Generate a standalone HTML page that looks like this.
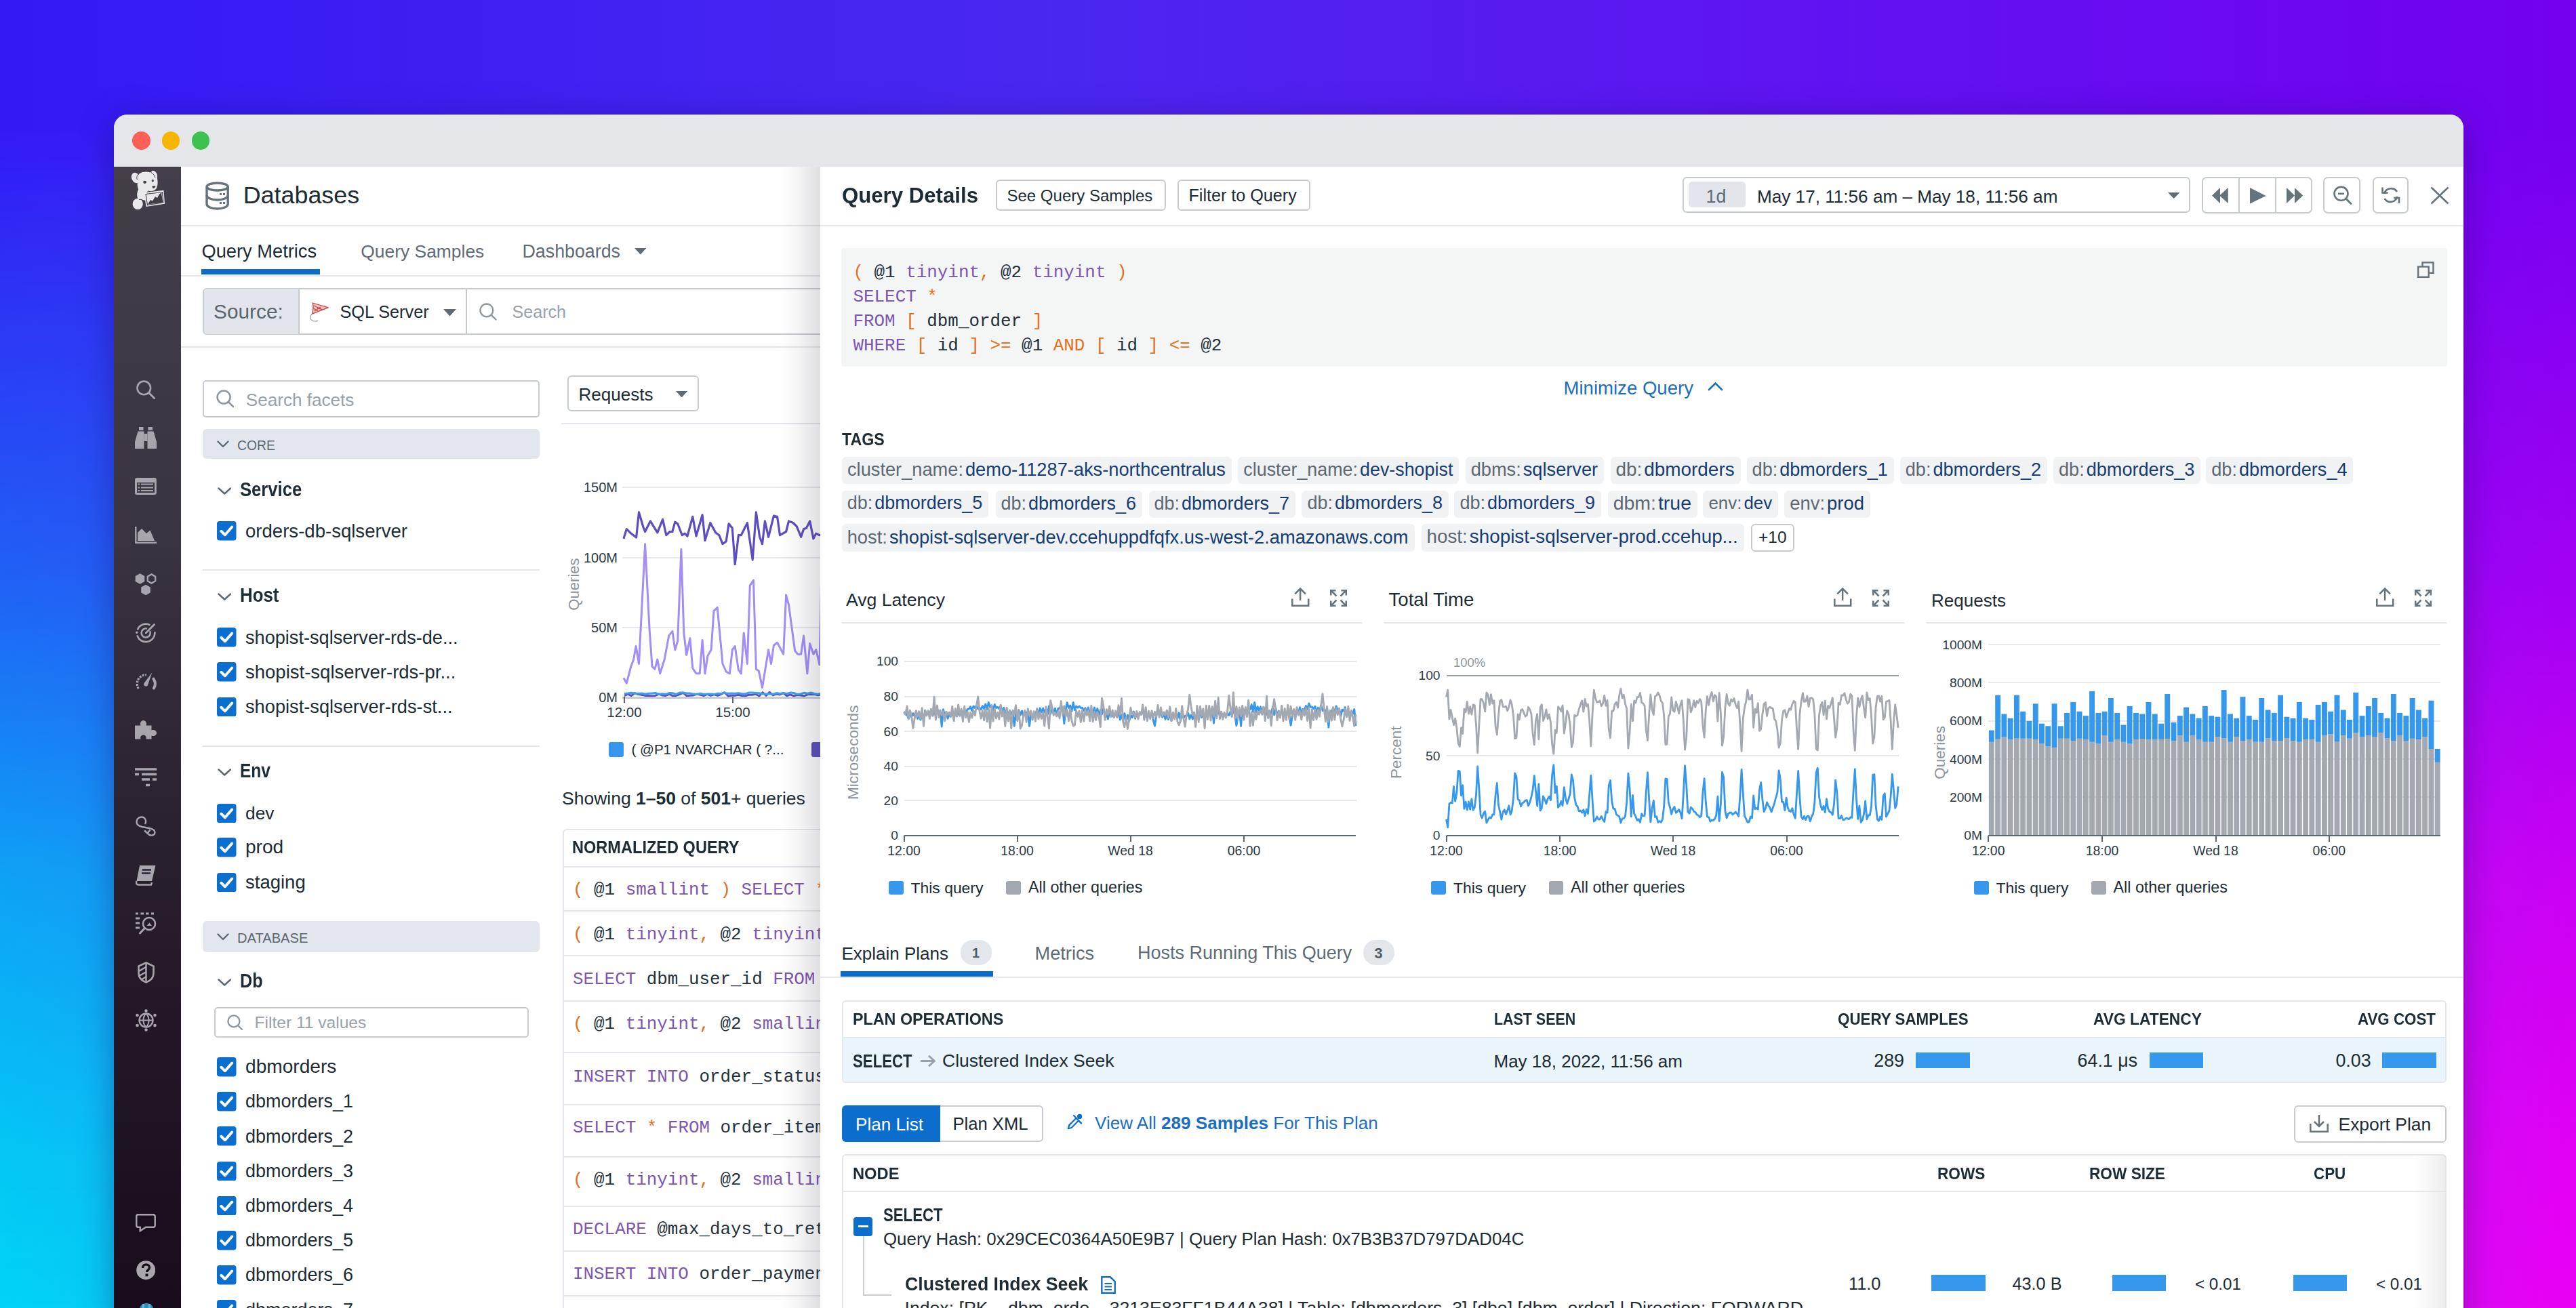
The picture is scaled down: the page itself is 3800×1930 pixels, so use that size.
<!DOCTYPE html><html><head><meta charset="utf-8"><style>
*{box-sizing:border-box;margin:0;padding:0}
html,body{width:3800px;height:1930px;overflow:hidden;font-family:"Liberation Sans",sans-serif;color:#1c2b34}
.a{position:absolute}
.t{position:absolute;white-space:nowrap;line-height:1}
.bg{position:absolute;left:0;top:0;width:3800px;height:1930px}
.mono{font-family:"Liberation Mono",monospace}
.kw{color:#7b57b0}
.op{color:#e0701e}
.tx{color:#23313b}
</style></head><body>
<div class="bg" style="background:linear-gradient(to right,#00d4f6 0%,#4d7af2 45%,#ea00f5 100%)"></div>
<div class="bg" style="background:linear-gradient(to right,#3419f5 0%,#4a27f1 40%,#7400f2 100%);-webkit-mask-image:linear-gradient(to bottom,#000 0%,#000 10%,rgba(0,0,0,.62) 44%,rgba(0,0,0,.27) 67%,rgba(0,0,0,.07) 88%,transparent 100%)"></div>
<div class="a" style="left:168px;top:169px;width:3466px;height:1900px;border-radius:20px;box-shadow:0 8px 50px rgba(20,0,80,.35)"></div>
<div class="a" style="left:168px;top:169px;width:3466px;height:1800px;border-radius:20px 20px 0 0;background:#fff;overflow:hidden">
<div class="a" style="left:0px;top:0px;width:3466px;height:77px;background:#e4e6ea"></div></div>
<div class="a" style="left:195.2px;top:194.3px;width:26.6px;height:26.6px;border-radius:50%;background:#fe5f57"></div>
<div class="a" style="left:238.9px;top:194.3px;width:26.6px;height:26.6px;border-radius:50%;background:#f6b600"></div>
<div class="a" style="left:282.7px;top:194.3px;width:26.6px;height:26.6px;border-radius:50%;background:#3ec14e"></div>
<div class="a" style="left:168px;top:246px;width:99px;height:1700px;background:linear-gradient(to bottom,#433e48 0%,#3b3441 30%,#231929 70%,#170c1b 100%)"></div>
<svg class="a" style="left:302.0px;top:267.5px;" width="38" height="42" viewBox="0 0 38 42"><ellipse cx="18.6" cy="7.5" rx="15.6" ry="5.5" fill="none" stroke="#66737a" stroke-width="3.4"/><path d="M3 7.5 V33 C3 37 10 40 18.6 40 C27 40 34.2 37 34.2 33 V7.5" fill="none" stroke="#66737a" stroke-width="3.4"/><path d="M3 20 C3 24 10 27 18.6 27 C27 27 34.2 24 34.2 20" fill="none" stroke="#66737a" stroke-width="3.4"/><rect x="22" y="17" width="3" height="3" fill="#66737a"/><rect x="27" y="17" width="3" height="3" fill="#66737a"/><rect x="22" y="30" width="3" height="3" fill="#66737a"/><rect x="27" y="30" width="3" height="3" fill="#66737a"/></svg>
<div class="t" style="left:358.8px;top:271.2px;font-size:35.85px;font-weight:400;color:#1c2b34;">Databases</div>
<div class="a" style="left:267.0px;top:331.5px;width:943.0px;height:2.0px;background:#e3e6ea"></div>
<div class="t" style="left:297.5px;top:357.4px;font-size:27.25px;font-weight:400;color:#1c2b34;">Query Metrics</div>
<div class="t" style="left:532.3px;top:358.1px;font-size:26.41px;font-weight:400;color:#5f6b74;">Query Samples</div>
<div class="t" style="left:770.5px;top:357.8px;font-size:26.8px;font-weight:400;color:#5f6b74;">Dashboards</div>
<svg class="a" style="left:936.0px;top:366.0px;" width="17.4" height="9.5" viewBox="0 0 17.4 9.5"><path d="M0 0 L17.4 0 L8.7 9.5 Z" fill="#5f6a72"/></svg>
<div class="a" style="left:297.0px;top:397.0px;width:174.6px;height:8.3px;background:#0b6dcb"></div>
<div class="a" style="left:267.0px;top:405.5px;width:943.0px;height:2.0px;background:#e3e6ea"></div>
<div class="a" style="left:299.0px;top:424.5px;width:1000.0px;height:69.5px;border:2px solid #c6cbd2;border-radius:6px;background:#fff"></div>
<div class="a" style="left:300.5px;top:426.0px;width:139.0px;height:66.5px;background:#e2e6ec;border-radius:5px 0 0 5px"></div>
<div class="a" style="left:439.5px;top:426.0px;width:2.0px;height:66.5px;background:#c6cbd2"></div>
<div class="a" style="left:687.0px;top:426.0px;width:2.0px;height:66.5px;background:#c6cbd2"></div>
<div class="t" style="left:315.0px;top:444.7px;font-size:29.83px;font-weight:400;color:#5a666e;">Source:</div>
<svg class="a" style="left:456.0px;top:446.0px;" width="30" height="30" viewBox="0 0 30 30"><path d="M5.3 1 L28.2 7.8 L4.4 17.2 C6 12 6.5 6 5.3 1 Z" fill="#f2c4c4" stroke="#c9423f" stroke-width="1.3" stroke-linejoin="round"/><path d="M7 5 L18 10 M8 13 L17 7 M6.5 9 L13 13 M12 8.5 L20 11" stroke="#c9423f" stroke-width="1.2"/><path d="M4.4 17.2 C1 20 0 25 6 27.5 C9 28.5 12 28 13 27" fill="none" stroke="#9aa0a5" stroke-width="1.3"/></svg>
<div class="t" style="left:501.5px;top:448.1px;font-size:25.29px;font-weight:400;color:#1c2b34;">SQL Server</div>
<svg class="a" style="left:653.6px;top:456.0px;" width="19" height="10.5" viewBox="0 0 19 10.5"><path d="M0 0 L19 0 L9.5 10.5 Z" fill="#5f6a72"/></svg>
<svg class="a" style="left:707.0px;top:446.5px;" width="26" height="26" viewBox="0 0 26 26"><circle cx="10.9" cy="10.9" r="9.4" fill="none" stroke="#8e979e" stroke-width="2.4"/><path d="M17.7 17.7 L24.5 24.5" stroke="#8e979e" stroke-width="2.4" stroke-linecap="round"/></svg>
<div class="t" style="left:755.5px;top:448.2px;font-size:25.12px;font-weight:400;color:#99a1a8;">Search</div>
<div class="a" style="left:267.0px;top:511.0px;width:943.0px;height:2.0px;background:#e3e6ea"></div>
<div class="a" style="left:299.0px;top:561.0px;width:497.0px;height:54.5px;border:2px solid #c6cbd2;border-radius:5px"></div>
<svg class="a" style="left:319.0px;top:575.0px;" width="26.5" height="26.5" viewBox="0 0 26.5 26.5"><circle cx="11.1" cy="11.1" r="9.5" fill="none" stroke="#8e979e" stroke-width="2.5"/><path d="M18.0 18.0 L25.0 25.0" stroke="#8e979e" stroke-width="2.5" stroke-linecap="round"/></svg>
<div class="t" style="left:362.8px;top:577.4px;font-size:26.1px;font-weight:400;color:#99a1a8;">Search facets</div>
<div class="a" style="left:299.0px;top:632.5px;width:497.0px;height:44.0px;background:#e3e7ed;border-radius:6px"></div>
<svg class="a" style="left:320.0px;top:650.0px;" width="18" height="10.5" viewBox="0 0 18 10.5"><path d="M1.5 1.5 L9.0 9.0 L16.5 1.5" fill="none" stroke="#5c6871" stroke-width="2.4" stroke-linecap="round" stroke-linejoin="round"/></svg>
<div class="t" style="left:350.0px;top:648.1px;font-size:19.38px;font-weight:400;color:#5c6871;">CORE</div>
<svg class="a" style="left:320.5px;top:719.0px;" width="20.5" height="11" viewBox="0 0 20.5 11"><path d="M1.5 1.5 L10.25 9.5 L19.0 1.5" fill="none" stroke="#5c6871" stroke-width="2.4" stroke-linecap="round" stroke-linejoin="round"/></svg>
<div class="t" style="left:353.5px;top:708.2px;font-size:28.7px;font-weight:700;color:#1c2b34;transform:scaleX(0.8939);transform-origin:0 0;">Service</div>
<svg class="a" style="left:320.0px;top:769.0px;" width="28.5" height="28.5" viewBox="0 0 28.5 28.5"><rect x="0" y="0" width="28.5" height="28.5" rx="4" fill="#0b6fcf"/><path d="M6.3 14.8 L12.0 20.2 L22.2 8.5" fill="none" stroke="#fff" stroke-width="4.0" stroke-linecap="round" stroke-linejoin="round"/></svg>
<div class="t" style="left:362.0px;top:769.7px;font-size:27.57px;font-weight:400;color:#1c2b34;">orders-db-sqlserver</div>
<div class="a" style="left:299.0px;top:839.5px;width:497.0px;height:2.0px;background:#e3e6ea"></div>
<svg class="a" style="left:320.5px;top:874.5px;" width="20.5" height="11" viewBox="0 0 20.5 11"><path d="M1.5 1.5 L10.25 9.5 L19.0 1.5" fill="none" stroke="#5c6871" stroke-width="2.4" stroke-linecap="round" stroke-linejoin="round"/></svg>
<div class="t" style="left:353.5px;top:863.7px;font-size:28.7px;font-weight:700;color:#1c2b34;transform:scaleX(0.9000);transform-origin:0 0;">Host</div>
<svg class="a" style="left:320.0px;top:926.0px;" width="28.5" height="28.5" viewBox="0 0 28.5 28.5"><rect x="0" y="0" width="28.5" height="28.5" rx="4" fill="#0b6fcf"/><path d="M6.3 14.8 L12.0 20.2 L22.2 8.5" fill="none" stroke="#fff" stroke-width="4.0" stroke-linecap="round" stroke-linejoin="round"/></svg>
<div class="t" style="left:362.0px;top:927.0px;font-size:27.14px;font-weight:400;color:#1c2b34;">shopist-sqlserver-rds-de...</div>
<svg class="a" style="left:320.0px;top:977.0px;" width="28.5" height="28.5" viewBox="0 0 28.5 28.5"><rect x="0" y="0" width="28.5" height="28.5" rx="4" fill="#0b6fcf"/><path d="M6.3 14.8 L12.0 20.2 L22.2 8.5" fill="none" stroke="#fff" stroke-width="4.0" stroke-linecap="round" stroke-linejoin="round"/></svg>
<div class="t" style="left:362.0px;top:977.7px;font-size:27.53px;font-weight:400;color:#1c2b34;">shopist-sqlserver-rds-pr...</div>
<svg class="a" style="left:320.0px;top:1028.5px;" width="28.5" height="28.5" viewBox="0 0 28.5 28.5"><rect x="0" y="0" width="28.5" height="28.5" rx="4" fill="#0b6fcf"/><path d="M6.3 14.8 L12.0 20.2 L22.2 8.5" fill="none" stroke="#fff" stroke-width="4.0" stroke-linecap="round" stroke-linejoin="round"/></svg>
<div class="t" style="left:362.0px;top:1029.4px;font-size:27.23px;font-weight:400;color:#1c2b34;">shopist-sqlserver-rds-st...</div>
<div class="a" style="left:299.0px;top:1100.0px;width:497.0px;height:2.0px;background:#e3e6ea"></div>
<svg class="a" style="left:320.5px;top:1134.0px;" width="20.5" height="11" viewBox="0 0 20.5 11"><path d="M1.5 1.5 L10.25 9.5 L19.0 1.5" fill="none" stroke="#5c6871" stroke-width="2.4" stroke-linecap="round" stroke-linejoin="round"/></svg>
<div class="t" style="left:353.5px;top:1123.2px;font-size:28.7px;font-weight:700;color:#1c2b34;transform:scaleX(0.8549);transform-origin:0 0;">Env</div>
<svg class="a" style="left:320.0px;top:1185.6px;" width="28.5" height="28.5" viewBox="0 0 28.5 28.5"><rect x="0" y="0" width="28.5" height="28.5" rx="4" fill="#0b6fcf"/><path d="M6.3 14.8 L12.0 20.2 L22.2 8.5" fill="none" stroke="#fff" stroke-width="4.0" stroke-linecap="round" stroke-linejoin="round"/></svg>
<div class="t" style="left:362.0px;top:1187.3px;font-size:26.36px;font-weight:400;color:#1c2b34;">dev</div>
<svg class="a" style="left:320.0px;top:1236.0px;" width="28.5" height="28.5" viewBox="0 0 28.5 28.5"><rect x="0" y="0" width="28.5" height="28.5" rx="4" fill="#0b6fcf"/><path d="M6.3 14.8 L12.0 20.2 L22.2 8.5" fill="none" stroke="#fff" stroke-width="4.0" stroke-linecap="round" stroke-linejoin="round"/></svg>
<div class="t" style="left:362.0px;top:1236.2px;font-size:28.08px;font-weight:400;color:#1c2b34;">prod</div>
<svg class="a" style="left:320.0px;top:1287.5px;" width="28.5" height="28.5" viewBox="0 0 28.5 28.5"><rect x="0" y="0" width="28.5" height="28.5" rx="4" fill="#0b6fcf"/><path d="M6.3 14.8 L12.0 20.2 L22.2 8.5" fill="none" stroke="#fff" stroke-width="4.0" stroke-linecap="round" stroke-linejoin="round"/></svg>
<div class="t" style="left:362.0px;top:1288.2px;font-size:27.51px;font-weight:400;color:#1c2b34;">staging</div>
<div class="a" style="left:299.0px;top:1359.0px;width:497.0px;height:45.6px;background:#e3e7ed;border-radius:6px"></div>
<svg class="a" style="left:320.0px;top:1377.0px;" width="18" height="10.5" viewBox="0 0 18 10.5"><path d="M1.5 1.5 L9.0 9.0 L16.5 1.5" fill="none" stroke="#5c6871" stroke-width="2.4" stroke-linecap="round" stroke-linejoin="round"/></svg>
<div class="t" style="left:350.0px;top:1373.5px;font-size:20.13px;font-weight:400;color:#5c6871;">DATABASE</div>
<svg class="a" style="left:320.5px;top:1443.5px;" width="20.5" height="11" viewBox="0 0 20.5 11"><path d="M1.5 1.5 L10.25 9.5 L19.0 1.5" fill="none" stroke="#5c6871" stroke-width="2.4" stroke-linecap="round" stroke-linejoin="round"/></svg>
<div class="t" style="left:353.5px;top:1432.7px;font-size:28.7px;font-weight:700;color:#1c2b34;transform:scaleX(0.8756);transform-origin:0 0;">Db</div>
<div class="a" style="left:316.0px;top:1485.7px;width:464.0px;height:45.3px;border:2px solid #c6cbd2;border-radius:5px"></div>
<svg class="a" style="left:335.0px;top:1497.0px;" width="23.5" height="23.5" viewBox="0 0 23.5 23.5"><circle cx="9.9" cy="9.9" r="8.5" fill="none" stroke="#8e979e" stroke-width="2.3"/><path d="M16.0 16.0 L22.0 22.0" stroke="#8e979e" stroke-width="2.3" stroke-linecap="round"/></svg>
<div class="t" style="left:375.5px;top:1496.7px;font-size:24.57px;font-weight:400;color:#99a1a8;">Filter 11 values</div>
<svg class="a" style="left:320.0px;top:1560.0px;" width="28.5" height="28.5" viewBox="0 0 28.5 28.5"><rect x="0" y="0" width="28.5" height="28.5" rx="4" fill="#0b6fcf"/><path d="M6.3 14.8 L12.0 20.2 L22.2 8.5" fill="none" stroke="#fff" stroke-width="4.0" stroke-linecap="round" stroke-linejoin="round"/></svg>
<div class="t" style="left:362.0px;top:1560.2px;font-size:28.12px;font-weight:400;color:#1c2b34;">dbmorders</div>
<svg class="a" style="left:320.0px;top:1611.2px;" width="28.5" height="28.5" viewBox="0 0 28.5 28.5"><rect x="0" y="0" width="28.5" height="28.5" rx="4" fill="#0b6fcf"/><path d="M6.3 14.8 L12.0 20.2 L22.2 8.5" fill="none" stroke="#fff" stroke-width="4.0" stroke-linecap="round" stroke-linejoin="round"/></svg>
<div class="t" style="left:362.0px;top:1612.4px;font-size:26.98px;font-weight:400;color:#1c2b34;">dbmorders_1</div>
<svg class="a" style="left:320.0px;top:1662.4px;" width="28.5" height="28.5" viewBox="0 0 28.5 28.5"><rect x="0" y="0" width="28.5" height="28.5" rx="4" fill="#0b6fcf"/><path d="M6.3 14.8 L12.0 20.2 L22.2 8.5" fill="none" stroke="#fff" stroke-width="4.0" stroke-linecap="round" stroke-linejoin="round"/></svg>
<div class="t" style="left:362.0px;top:1663.6px;font-size:26.98px;font-weight:400;color:#1c2b34;">dbmorders_2</div>
<svg class="a" style="left:320.0px;top:1713.6px;" width="28.5" height="28.5" viewBox="0 0 28.5 28.5"><rect x="0" y="0" width="28.5" height="28.5" rx="4" fill="#0b6fcf"/><path d="M6.3 14.8 L12.0 20.2 L22.2 8.5" fill="none" stroke="#fff" stroke-width="4.0" stroke-linecap="round" stroke-linejoin="round"/></svg>
<div class="t" style="left:362.0px;top:1714.8px;font-size:26.98px;font-weight:400;color:#1c2b34;">dbmorders_3</div>
<svg class="a" style="left:320.0px;top:1764.8px;" width="28.5" height="28.5" viewBox="0 0 28.5 28.5"><rect x="0" y="0" width="28.5" height="28.5" rx="4" fill="#0b6fcf"/><path d="M6.3 14.8 L12.0 20.2 L22.2 8.5" fill="none" stroke="#fff" stroke-width="4.0" stroke-linecap="round" stroke-linejoin="round"/></svg>
<div class="t" style="left:362.0px;top:1766.0px;font-size:26.98px;font-weight:400;color:#1c2b34;">dbmorders_4</div>
<svg class="a" style="left:320.0px;top:1816.0px;" width="28.5" height="28.5" viewBox="0 0 28.5 28.5"><rect x="0" y="0" width="28.5" height="28.5" rx="4" fill="#0b6fcf"/><path d="M6.3 14.8 L12.0 20.2 L22.2 8.5" fill="none" stroke="#fff" stroke-width="4.0" stroke-linecap="round" stroke-linejoin="round"/></svg>
<div class="t" style="left:362.0px;top:1817.2px;font-size:26.98px;font-weight:400;color:#1c2b34;">dbmorders_5</div>
<svg class="a" style="left:320.0px;top:1867.2px;" width="28.5" height="28.5" viewBox="0 0 28.5 28.5"><rect x="0" y="0" width="28.5" height="28.5" rx="4" fill="#0b6fcf"/><path d="M6.3 14.8 L12.0 20.2 L22.2 8.5" fill="none" stroke="#fff" stroke-width="4.0" stroke-linecap="round" stroke-linejoin="round"/></svg>
<div class="t" style="left:362.0px;top:1868.4px;font-size:26.98px;font-weight:400;color:#1c2b34;">dbmorders_6</div>
<svg class="a" style="left:320.0px;top:1918.4px;" width="28.5" height="28.5" viewBox="0 0 28.5 28.5"><rect x="0" y="0" width="28.5" height="28.5" rx="4" fill="#0b6fcf"/><path d="M6.3 14.8 L12.0 20.2 L22.2 8.5" fill="none" stroke="#fff" stroke-width="4.0" stroke-linecap="round" stroke-linejoin="round"/></svg>
<div class="t" style="left:362.0px;top:1919.6px;font-size:26.98px;font-weight:400;color:#1c2b34;">dbmorders_7</div>
<div class="a" style="left:836.7px;top:553.5px;width:194.0px;height:53.5px;border:2px solid #c6cbd2;border-radius:6px"></div>
<div class="t" style="left:853.5px;top:569.0px;font-size:26.04px;font-weight:400;color:#1c2b34;">Requests</div>
<svg class="a" style="left:996.8px;top:576.5px;" width="17.2" height="9.5" viewBox="0 0 17.2 9.5"><path d="M0 0 L17.2 0 L8.6 9.5 Z" fill="#5f6a72"/></svg>
<div class="a" style="left:828.0px;top:623.5px;width:382.0px;height:2.0px;background:#e3e6ea"></div>
<div class="a" style="left:829.6px;top:1222.5px;width:500.0px;height:800.0px;border:2px solid #e3e6ea;border-radius:6px"></div>
<div class="t" style="left:844.0px;top:1237.5px;font-size:25.36px;font-weight:700;color:#1c2b34;transform:scaleX(0.9290);transform-origin:0 0;">NORMALIZED QUERY</div>
<div class="a" style="left:831.0px;top:1277.5px;width:379.0px;height:2.0px;background:#e3e6ea"></div>
<div class="a" style="left:831.0px;top:1343.0px;width:379.0px;height:2.0px;background:#e3e6ea"></div>
<div class="a" style="left:831.0px;top:1409.0px;width:379.0px;height:2.0px;background:#e3e6ea"></div>
<div class="a" style="left:831.0px;top:1475.5px;width:379.0px;height:2.0px;background:#e3e6ea"></div>
<div class="a" style="left:831.0px;top:1552.0px;width:379.0px;height:2.0px;background:#e3e6ea"></div>
<div class="a" style="left:831.0px;top:1629.0px;width:379.0px;height:2.0px;background:#e3e6ea"></div>
<div class="a" style="left:831.0px;top:1705.7px;width:379.0px;height:2.0px;background:#e3e6ea"></div>
<div class="a" style="left:831.0px;top:1778.7px;width:379.0px;height:2.0px;background:#e3e6ea"></div>
<div class="a" style="left:831.0px;top:1844.6px;width:379.0px;height:2.0px;background:#e3e6ea"></div>
<div class="a" style="left:831.0px;top:1911.0px;width:379.0px;height:2.0px;background:#e3e6ea"></div>
<div class="t" style="left:845.0px;top:1301.2px;font-size:25.9px;font-weight:400;color:#1c2b34;font-family:'Liberation Mono',monospace;letter-spacing:0px"><span class="op">(</span><span class="tx"> @1 </span><span class="kw">smallint</span><span class="op"> )</span><span class="kw"> SELECT</span><span class="op"> *</span></div>
<div class="t" style="left:845.0px;top:1366.7px;font-size:25.9px;font-weight:400;color:#1c2b34;font-family:'Liberation Mono',monospace;letter-spacing:0px"><span class="op">(</span><span class="tx"> @1 </span><span class="kw">tinyint</span><span class="op">,</span><span class="tx"> @2 </span><span class="kw">tinyint</span></div>
<div class="t" style="left:845.0px;top:1432.7px;font-size:25.9px;font-weight:400;color:#1c2b34;font-family:'Liberation Mono',monospace;letter-spacing:0px"><span class="kw">SELECT</span><span class="tx"> dbm_user_id </span><span class="kw">FROM</span></div>
<div class="t" style="left:845.0px;top:1499.2px;font-size:25.9px;font-weight:400;color:#1c2b34;font-family:'Liberation Mono',monospace;letter-spacing:0px"><span class="op">(</span><span class="tx"> @1 </span><span class="kw">tinyint</span><span class="op">,</span><span class="tx"> @2 </span><span class="kw">smallint</span></div>
<div class="t" style="left:845.0px;top:1576.7px;font-size:25.9px;font-weight:400;color:#1c2b34;font-family:'Liberation Mono',monospace;letter-spacing:0px"><span class="kw">INSERT INTO</span><span class="tx"> order_status</span></div>
<div class="t" style="left:845.0px;top:1652.2px;font-size:25.9px;font-weight:400;color:#1c2b34;font-family:'Liberation Mono',monospace;letter-spacing:0px"><span class="kw">SELECT</span><span class="op"> *</span><span class="kw"> FROM</span><span class="tx"> order_item</span></div>
<div class="t" style="left:845.0px;top:1729.2px;font-size:25.9px;font-weight:400;color:#1c2b34;font-family:'Liberation Mono',monospace;letter-spacing:0px"><span class="op">(</span><span class="tx"> @1 </span><span class="kw">tinyint</span><span class="op">,</span><span class="tx"> @2 </span><span class="kw">smallint</span></div>
<div class="t" style="left:845.0px;top:1802.2px;font-size:25.9px;font-weight:400;color:#1c2b34;font-family:'Liberation Mono',monospace;letter-spacing:0px"><span class="kw">DECLARE</span><span class="tx"> @max_days_to_ret</span></div>
<div class="t" style="left:845.0px;top:1868.2px;font-size:25.9px;font-weight:400;color:#1c2b34;font-family:'Liberation Mono',monospace;letter-spacing:0px"><span class="kw">INSERT INTO</span><span class="tx"> order_paymen</span></div>
<div class="t" style="left:829.0px;top:1165.1px;font-size:26.5px;font-weight:400;color:#1c2b34;">Showing <b>1–50</b> of <b>501</b>+ queries</div>
<div class="a" style="left:918.0px;top:717.5px;width:292.0px;height:2.0px;background:#e6e8eb"></div>
<div class="a" style="left:918.0px;top:821.5px;width:292.0px;height:2.0px;background:#e6e8eb"></div>
<div class="a" style="left:918.0px;top:925.0px;width:292.0px;height:2.0px;background:#e6e8eb"></div>
<div class="t" style="left:861.0px;top:708.6px;font-size:20px;font-weight:400;color:#2c3a44;">150M</div>
<div class="t" style="left:861.0px;top:812.6px;font-size:20px;font-weight:400;color:#2c3a44;">100M</div>
<div class="t" style="left:872.1px;top:916.1px;font-size:20px;font-weight:400;color:#2c3a44;">50M</div>
<div class="t" style="left:883.2px;top:1018.8px;font-size:20px;font-weight:400;color:#2c3a44;">0M</div>
<div class="a" style="left:918.0px;top:1027.5px;width:292.0px;height:3.0px;background:#c7ccd3"></div>
<div class="a" style="left:920.0px;top:1028.0px;width:2.0px;height:9.0px;background:#5c666e"></div>
<div class="t" style="left:895.3px;top:1041.1px;font-size:20.5px;font-weight:400;color:#2c3a44;">12:00</div>
<div class="a" style="left:1080.0px;top:1028.0px;width:2.0px;height:9.0px;background:#5c666e"></div>
<div class="t" style="left:1055.3px;top:1041.1px;font-size:20.5px;font-weight:400;color:#2c3a44;">15:00</div>
<div class="t" style="left:808.3px;top:850.9px;font-size:22.13px;color:#8d959b;transform:rotate(-90deg);transform-origin:38.7px 11.1px">Queries</div>
<svg class="a" style="left:0;top:0;clip-path:inset(0 2590px 0 0)" width="3800" height="1930"><polyline points="919.9,1000.3 924.3,1008.1 930.8,983.4 934.7,973.0 938.1,953.5 942.5,979.5 951.6,802.7 958.1,928.8 962.0,983.4 965.9,987.3 969.8,973.0 973.7,993.8 980.2,973.0 986.7,937.9 991.9,931.4 995.8,958.7 999.7,945.7 1004.9,810.5 1008.8,934.0 1012.7,966.5 1017.9,941.8 1021.8,986.0 1027.0,993.8 1032.2,993.8 1036.1,944.4 1040.0,993.8 1043.9,967.8 1049.1,958.7 1053.0,901.5 1058.2,896.3 1066.0,979.5 1071.2,991.2 1076.4,993.8 1080.3,958.7 1084.2,953.5 1089.4,988.6 1093.3,993.8 1097.2,934.0 1102.4,979.5 1106.3,863.8 1111.5,856.0 1115.4,987.3 1119.3,989.9 1124.5,1014.6 1133.6,958.7 1137.5,979.5 1141.4,952.2 1146.6,948.3 1155.7,965.2 1159.6,878.1 1163.5,892.4 1172.6,960.0 1176.5,965.2 1181.7,965.2 1185.6,937.9 1190.8,993.8 1194.7,949.6 1199.9,965.2 1203.8,958.7 1209.0,980.8 1211.6,856.0" fill="none" stroke="#a38df7" stroke-width="3" stroke-linejoin="round" /><polyline points="919.9,794.9 924.3,780.6 930.8,787.1 938.6,793.1 942.5,755.9 949.0,778.0 951.6,784.5 959.4,768.9 969.8,785.8 977.6,766.3 982.8,789.7 988.0,784.5 991.9,784.5 995.8,770.2 999.7,772.8 1006.2,789.7 1010.1,787.1 1014.0,791.0 1021.8,762.4 1027.0,791.0 1036.1,759.8 1040.0,797.5 1047.8,771.5 1055.6,785.8 1060.8,789.7 1066.0,802.7 1071.2,798.8 1075.1,772.8 1080.3,779.3 1084.2,832.6 1089.4,789.7 1093.3,789.7 1102.4,771.5 1110.2,826.1 1115.4,755.9 1120.6,792.3 1124.5,802.7 1128.4,768.9 1133.6,792.3 1141.4,761.1 1146.6,762.4 1150.5,789.7 1159.6,784.5 1163.5,768.9 1170.0,771.5 1175.2,776.7 1181.7,792.3 1185.6,780.6 1189.5,779.3 1194.7,768.9 1199.9,794.9 1203.8,787.1 1209.0,789.7 1216.8,785.8" fill="none" stroke="#5c4ec0" stroke-width="3.2" stroke-linejoin="round" /><polyline points="921.0,1026.7 926.1,1024.1 931.2,1026.6 936.3,1022.7 941.4,1024.6 946.5,1025.3 951.6,1026.4 956.7,1026.6 961.8,1026.7 966.9,1026.4 972.0,1024.1 977.1,1026.1 982.2,1026.4 987.3,1024.4 992.4,1026.7 997.5,1026.4 1002.6,1024.7 1007.7,1022.1 1012.8,1026.7 1017.9,1026.3 1023.0,1025.9 1028.1,1024.1 1033.2,1025.3 1038.3,1026.5 1043.4,1024.3 1048.5,1026.3 1053.6,1024.8 1058.7,1026.4 1063.8,1024.4 1068.9,1021.7 1074.0,1026.9 1079.1,1026.3 1084.2,1026.2 1089.3,1025.2 1094.4,1026.5 1099.5,1026.8 1104.6,1025.3 1109.7,1025.2 1114.8,1024.2 1119.9,1027.0 1125.0,1021.7 1130.1,1026.5 1135.2,1021.3 1140.3,1025.9 1145.4,1024.1 1150.5,1024.9 1155.6,1022.6 1160.7,1026.9 1165.8,1024.9 1170.9,1026.9 1176.0,1025.6 1181.1,1026.0 1186.2,1026.8 1191.3,1024.8 1196.4,1024.8 1201.5,1024.6 1206.6,1025.9 1211.7,1024.3 1216.8,1025.7 1221.9,1024.4" fill="none" stroke="#5c4ec0" stroke-width="3" stroke-linejoin="round" /><polyline points="921.0,1023.4 926.1,1023.1 931.2,1022.2 936.3,1023.3 941.4,1023.2 946.5,1023.0 951.6,1024.0 956.7,1023.2 961.8,1022.9 966.9,1022.5 972.0,1024.3 977.1,1023.7 982.2,1024.3 987.3,1022.5 992.4,1022.8 997.5,1024.4 1002.6,1022.0 1007.7,1022.1 1012.8,1022.9 1017.9,1023.0 1023.0,1024.1 1028.1,1024.5 1033.2,1023.2 1038.3,1024.4 1043.4,1024.0 1048.5,1023.9 1053.6,1024.4 1058.7,1023.3 1063.8,1023.4 1068.9,1022.4 1074.0,1023.2 1079.1,1022.9 1084.2,1023.3 1089.3,1022.8 1094.4,1023.4 1099.5,1023.8 1104.6,1022.0 1109.7,1022.0 1114.8,1022.4 1119.9,1022.7 1125.0,1023.7 1130.1,1023.9 1135.2,1023.8 1140.3,1024.3 1145.4,1022.6 1150.5,1023.5 1155.6,1022.4 1160.7,1023.5 1165.8,1022.1 1170.9,1022.4 1176.0,1024.5 1181.1,1024.0 1186.2,1022.2 1191.3,1023.3 1196.4,1022.0 1201.5,1023.5 1206.6,1024.3 1211.7,1022.9 1216.8,1022.6 1221.9,1023.8" fill="none" stroke="#3aa0ee" stroke-width="3" stroke-linejoin="round" /></svg>
<div class="a" style="left:897.5px;top:1095.0px;width:22.5px;height:22.0px;background:#3598ec;border-radius:3px"></div>
<div class="t" style="left:931.5px;top:1095.6px;font-size:20.56px;font-weight:400;color:#1c2b34;">( @P1 NVARCHAR ( ?...</div>
<div class="a" style="left:1197.0px;top:1095.0px;width:22.5px;height:22.0px;background:#5c4ec0;border-radius:3px"></div>
<div class="a" style="left:1150.0px;top:246.0px;width:60.0px;height:1700.0px;background:linear-gradient(to right,rgba(40,40,60,0) 0%,rgba(40,40,60,.04) 40%,rgba(40,40,60,.15) 100%)"></div>
<div class="a" style="left:1210.0px;top:246.0px;width:2424.0px;height:1700.0px;background:#fff"></div>
<div class="t" style="left:1241.5px;top:272.5px;font-size:31.88px;font-weight:700;color:#1c2b34;transform:scaleX(0.9779);transform-origin:0 0;">Query Details</div>
<div class="a" style="left:1469.0px;top:265.0px;width:250.6px;height:46.4px;border:2px solid #c6cbd2;border-radius:6px"></div>
<div class="t" style="left:1485.5px;top:277.2px;font-size:24.01px;font-weight:400;color:#1c2b34;">See Query Samples</div>
<div class="a" style="left:1737.0px;top:265.0px;width:196.0px;height:46.4px;border:2px solid #c6cbd2;border-radius:6px"></div>
<div class="t" style="left:1753.5px;top:276.2px;font-size:25.15px;font-weight:400;color:#1c2b34;">Filter to Query</div>
<div class="a" style="left:2481.7px;top:261.3px;width:749.7px;height:53.1px;border:2px solid #c6cbd2;border-radius:6px"></div>
<div class="a" style="left:2491.0px;top:268.4px;width:84.0px;height:37.9px;background:#e2e6ec;border-radius:5px"></div>
<div class="t" style="left:2516.5px;top:276.5px;font-size:26.79px;font-weight:400;color:#5f6b74;">1d</div>
<div class="t" style="left:2592.0px;top:277.1px;font-size:26.14px;font-weight:400;color:#1c2b34;">May 17, 11:56 am – May 18, 11:56 am</div>
<svg class="a" style="left:3197.7px;top:284.0px;" width="17.6" height="9" viewBox="0 0 17.6 9"><path d="M0 0 L17.6 0 L8.8 9 Z" fill="#5f6a72"/></svg>
<div class="a" style="left:3248.3px;top:260.9px;width:162.3px;height:53.7px;border:2px solid #c6cbd2;border-radius:7px"></div>
<div class="a" style="left:3302.0px;top:262.0px;width:2.0px;height:51.5px;background:#c6cbd2"></div>
<div class="a" style="left:3355.6px;top:262.0px;width:2.0px;height:51.5px;background:#c6cbd2"></div>
<svg class="a" style="left:3263.2px;top:276.8px;" width="24" height="23" viewBox="0 0 24 23"><path d="M0 11.5 L12 0 V23 Z M11 11.5 L23.8 0 V23 Z" fill="#66737a"/></svg>
<svg class="a" style="left:3319.0px;top:276.5px;" width="24" height="24" viewBox="0 0 24 24"><path d="M0 0 L23.6 12 L0 23.5 Z" fill="#66737a"/></svg>
<svg class="a" style="left:3372.5px;top:276.8px;" width="25" height="23" viewBox="0 0 25 23"><path d="M0 0 L12 11.5 L0 23 Z M12 0 L24.2 11.5 L12 23 Z" fill="#66737a"/></svg>
<div class="a" style="left:3427.4px;top:260.9px;width:54.8px;height:53.7px;border:2px solid #c6cbd2;border-radius:7px"></div>
<svg class="a" style="left:3440.0px;top:273.0px;" width="30" height="30" viewBox="0 0 30 30"><circle cx="13.5" cy="12.8" r="10" fill="none" stroke="#66737a" stroke-width="2.6"/><path d="M9 12.8 H18" stroke="#66737a" stroke-width="2.6"/><path d="M20.8 20.2 L28 27.4" stroke="#66737a" stroke-width="2.8" stroke-linecap="round"/></svg>
<div class="a" style="left:3499.7px;top:260.9px;width:53.4px;height:53.7px;border:2px solid #c6cbd2;border-radius:7px"></div>
<svg class="a" style="left:3513.0px;top:274.5px;" width="28" height="27" viewBox="0 0 28 27"><path d="M4 11 A10.5 10.5 0 0 1 23 8" fill="none" stroke="#66737a" stroke-width="2.6"/><path d="M23.5 15 A10.5 10.5 0 0 1 4.5 18" fill="none" stroke="#66737a" stroke-width="2.6"/><path d="M1.5 1.5 V9.5 H9.5" fill="none" stroke="#66737a" stroke-width="2.6"/><path d="M26 25 V17 H18" fill="none" stroke="#66737a" stroke-width="2.6"/></svg>
<svg class="a" style="left:3584.5px;top:274.5px;" width="28" height="27" viewBox="0 0 28 27"><path d="M1.5 1.5 L26.5 25.5 M26.5 1.5 L1.5 25.5" stroke="#66737a" stroke-width="2.6"/></svg>
<div class="a" style="left:1210.0px;top:331.5px;width:2423.0px;height:2.0px;background:#e3e6ea"></div>
<div class="a" style="left:1241.3px;top:365.8px;width:2368.9px;height:175.7px;background:#f4f5f5;border-radius:4px"></div>
<div class="t" style="left:1258.5px;top:390.4px;font-size:25.9px;font-weight:400;color:#1c2b34;font-family:'Liberation Mono',monospace;"><span class="op">(</span><span class="tx"> @1 </span><span class="kw">tinyint</span><span class="op">,</span><span class="tx"> @2 </span><span class="kw">tinyint</span><span class="op"> )</span></div>
<div class="t" style="left:1258.5px;top:426.2px;font-size:25.9px;font-weight:400;color:#1c2b34;font-family:'Liberation Mono',monospace;"><span class="kw">SELECT</span><span class="op"> *</span></div>
<div class="t" style="left:1258.5px;top:461.9px;font-size:25.9px;font-weight:400;color:#1c2b34;font-family:'Liberation Mono',monospace;"><span class="kw">FROM</span><span class="op"> [</span><span class="tx"> dbm_order </span><span class="op">]</span></div>
<div class="t" style="left:1258.5px;top:497.6px;font-size:25.9px;font-weight:400;color:#1c2b34;font-family:'Liberation Mono',monospace;"><span class="kw">WHERE</span><span class="op"> [</span><span class="tx"> id </span><span class="op">] &gt;=</span><span class="tx"> @1 </span><span class="op">AND [</span><span class="tx"> id </span><span class="op">] &lt;=</span><span class="tx"> @2</span></div>
<svg class="a" style="left:3565.5px;top:385.5px;" width="25" height="24" viewBox="0 0 25 24"><rect x="1.2" y="7.5" width="15.5" height="15.3" fill="none" stroke="#66737a" stroke-width="2.4"/><path d="M7.5 7.5 V1.2 H23.5 V16.8 H16.7" fill="none" stroke="#66737a" stroke-width="2.4"/></svg>
<div class="t" style="left:2306.5px;top:559.0px;font-size:27.57px;font-weight:400;color:#1a6ec2;">Minimize Query</div>
<svg class="a" style="left:2518.5px;top:562.5px;" width="23" height="14" viewBox="0 0 23 14"><path d="M2 12 L11.5 2.5 L21 12" fill="none" stroke="#1a6ec2" stroke-width="2.6" stroke-linecap="round"/></svg>
<div class="t" style="left:1241.5px;top:635.2px;font-size:26.38px;font-weight:700;color:#1c2b34;transform:scaleX(0.8819);transform-origin:0 0;">TAGS</div>
<div class="a" style="left:1242.0px;top:673.6px;width:575.0px;height:40.3px;background:#f1f2f4;border-radius:6px"></div>
<div class="t" style="left:1250.0px;top:679.1px;font-size:27.23px;font-weight:400;color:#1c2b34;"><span style="color:#5b6875">cluster_name:</span><span style="color:#143d74;margin-left:3px">demo-11287-aks-northcentralus</span></div>
<div class="a" style="left:1826.3px;top:673.6px;width:326.1px;height:40.3px;background:#f1f2f4;border-radius:6px"></div>
<div class="t" style="left:1834.3px;top:679.5px;font-size:26.86px;font-weight:400;color:#1c2b34;"><span style="color:#5b6875">cluster_name:</span><span style="color:#143d74;margin-left:3px">dev-shopist</span></div>
<div class="a" style="left:2161.7px;top:673.6px;width:204.5px;height:40.3px;background:#f1f2f4;border-radius:6px"></div>
<div class="t" style="left:2169.7px;top:679.2px;font-size:27.21px;font-weight:400;color:#1c2b34;"><span style="color:#5b6875">dbms:</span><span style="color:#143d74;margin-left:3px">sqlserver</span></div>
<div class="a" style="left:2375.6px;top:673.6px;width:192.0px;height:40.3px;background:#f1f2f4;border-radius:6px"></div>
<div class="t" style="left:2383.6px;top:678.6px;font-size:27.88px;font-weight:400;color:#1c2b34;"><span style="color:#5b6875">db:</span><span style="color:#143d74;margin-left:3px">dbmorders</span></div>
<div class="a" style="left:2576.6px;top:673.6px;width:217.2px;height:40.3px;background:#f1f2f4;border-radius:6px"></div>
<div class="t" style="left:2584.6px;top:679.3px;font-size:27.08px;font-weight:400;color:#1c2b34;"><span style="color:#5b6875">db:</span><span style="color:#143d74;margin-left:3px">dbmorders_1</span></div>
<div class="a" style="left:2802.8px;top:673.6px;width:217.2px;height:40.3px;background:#f1f2f4;border-radius:6px"></div>
<div class="t" style="left:2810.8px;top:679.3px;font-size:27.08px;font-weight:400;color:#1c2b34;"><span style="color:#5b6875">db:</span><span style="color:#143d74;margin-left:3px">dbmorders_2</span></div>
<div class="a" style="left:3029.0px;top:673.6px;width:217.4px;height:40.3px;background:#f1f2f4;border-radius:6px"></div>
<div class="t" style="left:3037.0px;top:679.3px;font-size:27.11px;font-weight:400;color:#1c2b34;"><span style="color:#5b6875">db:</span><span style="color:#143d74;margin-left:3px">dbmorders_3</span></div>
<div class="a" style="left:3254.3px;top:673.6px;width:217.2px;height:40.3px;background:#f1f2f4;border-radius:6px"></div>
<div class="t" style="left:3262.3px;top:679.3px;font-size:27.08px;font-weight:400;color:#1c2b34;"><span style="color:#5b6875">db:</span><span style="color:#143d74;margin-left:3px">dbmorders_4</span></div>
<div class="a" style="left:1241.7px;top:723.7px;width:216.6px;height:40.0px;background:#f1f2f4;border-radius:6px"></div>
<div class="t" style="left:1249.7px;top:729.4px;font-size:27.0px;font-weight:400;color:#1c2b34;"><span style="color:#5b6875">db:</span><span style="color:#143d74;margin-left:3px">dbmorders_5</span></div>
<div class="a" style="left:1468.5px;top:723.7px;width:216.5px;height:40.0px;background:#f1f2f4;border-radius:6px"></div>
<div class="t" style="left:1476.5px;top:729.5px;font-size:26.98px;font-weight:400;color:#1c2b34;"><span style="color:#5b6875">db:</span><span style="color:#143d74;margin-left:3px">dbmorders_6</span></div>
<div class="a" style="left:1694.5px;top:723.7px;width:216.5px;height:40.0px;background:#f1f2f4;border-radius:6px"></div>
<div class="t" style="left:1702.5px;top:729.5px;font-size:26.98px;font-weight:400;color:#1c2b34;"><span style="color:#5b6875">db:</span><span style="color:#143d74;margin-left:3px">dbmorders_7</span></div>
<div class="a" style="left:1920.4px;top:723.7px;width:216.6px;height:40.0px;background:#f1f2f4;border-radius:6px"></div>
<div class="t" style="left:1928.4px;top:729.4px;font-size:27.0px;font-weight:400;color:#1c2b34;"><span style="color:#5b6875">db:</span><span style="color:#143d74;margin-left:3px">dbmorders_8</span></div>
<div class="a" style="left:2145.4px;top:723.7px;width:216.6px;height:40.0px;background:#f1f2f4;border-radius:6px"></div>
<div class="t" style="left:2153.4px;top:729.4px;font-size:27.0px;font-weight:400;color:#1c2b34;"><span style="color:#5b6875">db:</span><span style="color:#143d74;margin-left:3px">dbmorders_9</span></div>
<div class="a" style="left:2371.7px;top:723.7px;width:132.3px;height:40.0px;background:#f1f2f4;border-radius:6px"></div>
<div class="t" style="left:2379.7px;top:728.2px;font-size:28.46px;font-weight:400;color:#1c2b34;"><span style="color:#5b6875">dbm:</span><span style="color:#143d74;margin-left:3px">true</span></div>
<div class="a" style="left:2512.4px;top:723.7px;width:110.9px;height:40.0px;background:#f1f2f4;border-radius:6px"></div>
<div class="t" style="left:2520.4px;top:730.3px;font-size:25.95px;font-weight:400;color:#1c2b34;"><span style="color:#5b6875">env:</span><span style="color:#143d74;margin-left:3px">dev</span></div>
<div class="a" style="left:2632.3px;top:723.7px;width:126.7px;height:40.0px;background:#f1f2f4;border-radius:6px"></div>
<div class="t" style="left:2640.3px;top:729.1px;font-size:27.42px;font-weight:400;color:#1c2b34;"><span style="color:#5b6875">env:</span><span style="color:#143d74;margin-left:3px">prod</span></div>
<div class="a" style="left:1241.7px;top:773.3px;width:845.3px;height:40.7px;background:#f1f2f4;border-radius:6px"></div>
<div class="t" style="left:1249.7px;top:778.8px;font-size:27.31px;font-weight:400;color:#1c2b34;"><span style="color:#5b6875">host:</span><span style="color:#143d74;margin-left:3px">shopist-sqlserver-dev.ccehuppdfqfx.us-west-2.amazonaws.com</span></div>
<div class="a" style="left:2096.5px;top:773.3px;width:476.5px;height:40.7px;background:#f1f2f4;border-radius:6px"></div>
<div class="t" style="left:2104.5px;top:778.3px;font-size:27.84px;font-weight:400;color:#1c2b34;"><span style="color:#5b6875">host:</span><span style="color:#143d74;margin-left:3px">shopist-sqlserver-prod.ccehup...</span></div>
<div class="a" style="left:2582.7px;top:773.3px;width:64.3px;height:40.7px;border:2px solid #c6cbd2;border-radius:6px"></div>
<div class="t" style="left:2594.0px;top:781.0px;font-size:24.46px;font-weight:400;color:#1c2b34;">+10</div>
<div class="t" style="left:1248.0px;top:872.2px;font-size:26.62px;font-weight:400;color:#1c2b34;">Avg Latency</div>
<svg class="a" style="left:1905.0px;top:866.5px;" width="27" height="29" viewBox="0 0 27 29"><path d="M1.3 16.5 V26.7 H25.2 V16.5" fill="none" stroke="#66737a" stroke-width="2.5"/><path d="M13.1 19 V2" stroke="#66737a" stroke-width="2.5"/><path d="M5.3 9.3 L13.1 1.5 L20.9 9.3" fill="none" stroke="#66737a" stroke-width="2.5"/></svg>
<svg class="a" style="left:1961.7px;top:869.5px;" width="25" height="25" viewBox="0 0 25 25"><path d="M1.2 8.5 V1.2 H8.5 M1.2 1.2 L9.5 9.5" fill="none" stroke="#66737a" stroke-width="2.5"/><path d="M16.5 1.2 H23.8 V8.5 M23.8 1.2 L15.5 9.5" fill="none" stroke="#66737a" stroke-width="2.5"/><path d="M1.2 16.5 V23.8 H8.5 M1.2 23.8 L9.5 15.5" fill="none" stroke="#66737a" stroke-width="2.5"/><path d="M16.5 23.8 H23.8 V16.5 M23.8 23.8 L15.5 15.5" fill="none" stroke="#66737a" stroke-width="2.5"/></svg>
<div class="a" style="left:1241.7px;top:918.0px;width:768.3px;height:2.0px;background:#e3e6ea"></div>
<div class="a" style="left:1333.5px;top:974.7px;width:667.0px;height:2.0px;background:#e6e8eb"></div>
<div class="a" style="left:1333.5px;top:1026.7px;width:667.0px;height:2.0px;background:#e6e8eb"></div>
<div class="a" style="left:1333.5px;top:1078.3px;width:667.0px;height:2.0px;background:#e6e8eb"></div>
<div class="a" style="left:1333.5px;top:1129.5px;width:667.0px;height:2.0px;background:#e6e8eb"></div>
<div class="a" style="left:1333.5px;top:1180.4px;width:667.0px;height:2.0px;background:#e6e8eb"></div>
<div class="t" style="left:1293.0px;top:966.4px;font-size:19.2px;font-weight:400;color:#2c3a44;">100</div>
<div class="t" style="left:1303.6px;top:1018.4px;font-size:19.2px;font-weight:400;color:#2c3a44;">80</div>
<div class="t" style="left:1303.6px;top:1070.0px;font-size:19.2px;font-weight:400;color:#2c3a44;">60</div>
<div class="t" style="left:1303.6px;top:1121.2px;font-size:19.2px;font-weight:400;color:#2c3a44;">40</div>
<div class="t" style="left:1303.6px;top:1172.1px;font-size:19.2px;font-weight:400;color:#2c3a44;">20</div>
<div class="t" style="left:1314.3px;top:1223.3px;font-size:19.2px;font-weight:400;color:#2c3a44;">0</div>
<div class="a" style="left:1333.5px;top:1231.6px;width:666.7px;height:2.0px;background:#5c666e"></div>
<div class="a" style="left:1332.5px;top:1232.6px;width:2.0px;height:9.0px;background:#5c666e"></div>
<div class="t" style="left:1309.2px;top:1246.2px;font-size:19.4px;font-weight:400;color:#2c3a44;">12:00</div>
<div class="a" style="left:1499.5px;top:1232.6px;width:2.0px;height:9.0px;background:#5c666e"></div>
<div class="t" style="left:1476.2px;top:1246.2px;font-size:19.4px;font-weight:400;color:#2c3a44;">18:00</div>
<div class="a" style="left:1666.6px;top:1232.6px;width:2.0px;height:9.0px;background:#5c666e"></div>
<div class="t" style="left:1634.3px;top:1246.2px;font-size:19.4px;font-weight:400;color:#2c3a44;">Wed 18</div>
<div class="a" style="left:1834.0px;top:1232.6px;width:2.0px;height:9.0px;background:#5c666e"></div>
<div class="t" style="left:1810.7px;top:1246.2px;font-size:19.4px;font-weight:400;color:#2c3a44;">06:00</div>
<div class="t" style="left:1190.0px;top:1099.2px;font-size:22.61px;color:#8d959b;transform:rotate(-90deg);transform-origin:69.7px 11.3px">Microseconds</div>
<div class="a" style="left:1311.3px;top:1299.5px;width:21.5px;height:20.5px;background:#3598ec;border-radius:3px"></div>
<div class="t" style="left:1343.5px;top:1298.6px;font-size:22.92px;font-weight:400;color:#1c2b34;">This query</div>
<div class="a" style="left:1484.0px;top:1299.5px;width:21.5px;height:20.5px;background:#a4a8b0;border-radius:3px"></div>
<div class="t" style="left:1517.0px;top:1298.3px;font-size:23.32px;font-weight:400;color:#1c2b34;">All other queries</div>
<svg class="a" style="left:0;top:0" width="3800" height="1930"><polyline points="1333.5,1050.3 1335.7,1052.5 1338.0,1054.2 1340.2,1060.5 1342.4,1053.2 1344.6,1057.8 1346.9,1052.6 1349.1,1056.6 1351.3,1050.0 1353.6,1060.6 1355.8,1054.6 1358.0,1062.2 1360.2,1053.4 1362.5,1061.8 1364.7,1048.5 1366.9,1054.0 1369.2,1051.6 1371.4,1054.8 1373.6,1046.7 1375.9,1056.1 1378.1,1048.5 1380.3,1056.0 1382.5,1047.3 1384.8,1054.5 1387.0,1048.1 1389.2,1072.1 1391.5,1046.8 1393.7,1055.7 1395.9,1050.5 1398.1,1060.3 1400.4,1053.9 1402.6,1057.4 1404.8,1049.0 1407.1,1060.9 1409.3,1048.9 1411.5,1056.8 1413.7,1050.9 1416.0,1056.0 1418.2,1048.1 1420.4,1052.6 1422.7,1047.4 1424.9,1054.9 1427.1,1046.1 1429.4,1046.3 1431.6,1042.7 1433.8,1048.7 1436.0,1042.0 1438.3,1044.5 1440.5,1040.7 1442.7,1045.7 1445.0,1044.4 1447.2,1046.6 1449.4,1041.8 1451.6,1045.7 1453.9,1038.9 1456.1,1046.5 1458.3,1036.4 1460.6,1043.3 1462.8,1040.8 1465.0,1048.0 1467.2,1039.4 1469.5,1044.5 1471.7,1043.3 1473.9,1045.8 1476.2,1042.0 1478.4,1050.1 1480.6,1044.4 1482.8,1051.4 1485.1,1047.7 1487.3,1056.2 1489.5,1048.2 1491.8,1053.1 1494.0,1050.8 1496.2,1071.4 1498.5,1053.2 1500.7,1055.2 1502.9,1048.0 1505.1,1055.2 1507.4,1049.0 1509.6,1055.8 1511.8,1050.7 1514.1,1052.3 1516.3,1049.7 1518.5,1071.3 1520.7,1054.2 1523.0,1059.0 1525.2,1052.8 1527.4,1054.3 1529.7,1047.3 1531.9,1055.6 1534.1,1044.9 1536.3,1050.9 1538.6,1045.1 1540.8,1051.1 1543.0,1048.9 1545.3,1054.2 1547.5,1041.9 1549.7,1053.1 1552.0,1045.4 1554.2,1052.6 1556.4,1045.2 1558.6,1055.8 1560.9,1045.4 1563.1,1044.8 1565.3,1041.3 1567.6,1045.7 1569.8,1067.5 1572.0,1047.0 1574.2,1036.7 1576.5,1044.8 1578.7,1040.9 1580.9,1049.4 1583.2,1036.4 1585.4,1047.6 1587.6,1042.0 1589.8,1044.1 1592.1,1042.0 1594.3,1044.5 1596.5,1044.1 1598.8,1048.6 1601.0,1044.8 1603.2,1052.0 1605.4,1043.9 1607.7,1052.9 1609.9,1052.8 1612.1,1052.4 1614.4,1044.0 1616.6,1054.5 1618.8,1045.5 1621.1,1056.0 1623.3,1047.6 1625.5,1053.6 1627.7,1045.2 1630.0,1054.6 1632.2,1052.8 1634.4,1060.9 1636.7,1051.0 1638.9,1056.7 1641.1,1055.6 1643.3,1058.3 1645.6,1053.4 1647.8,1056.8 1650.0,1049.4 1652.3,1062.1 1654.5,1054.4 1656.7,1063.9 1658.9,1052.6 1661.2,1063.8 1663.4,1055.2 1665.6,1063.8 1667.9,1056.1 1670.1,1058.6 1672.3,1049.9 1674.6,1060.3 1676.8,1051.4 1679.0,1058.4 1681.2,1051.9 1683.5,1054.2 1685.7,1047.4 1687.9,1056.9 1690.2,1055.2 1692.4,1060.0 1694.6,1052.9 1696.8,1057.9 1699.1,1051.2 1701.3,1063.0 1703.5,1071.0 1705.8,1055.3 1708.0,1050.2 1710.2,1055.3 1712.4,1051.5 1714.7,1058.2 1716.9,1052.8 1719.1,1061.4 1721.4,1054.0 1723.6,1061.5 1725.8,1052.4 1728.1,1063.6 1730.3,1052.5 1732.5,1060.4 1734.7,1053.6 1737.0,1060.1 1739.2,1051.8 1741.4,1063.7 1743.7,1054.7 1745.9,1059.3 1748.1,1056.3 1750.3,1056.5 1752.6,1051.9 1754.8,1060.7 1757.0,1055.0 1759.3,1060.9 1761.5,1055.0 1763.7,1062.6 1765.9,1051.8 1768.2,1061.7 1770.4,1047.7 1772.6,1058.6 1774.9,1052.5 1777.1,1059.6 1779.3,1051.9 1781.5,1056.9 1783.8,1050.3 1786.0,1054.8 1788.2,1044.0 1790.5,1067.0 1792.7,1043.0 1794.9,1052.9 1797.2,1049.7 1799.4,1055.9 1801.6,1051.4 1803.8,1058.0 1806.1,1052.7 1808.3,1057.2 1810.5,1051.9 1812.8,1055.6 1815.0,1050.4 1817.2,1055.7 1819.4,1047.5 1821.7,1054.7 1823.9,1070.7 1826.1,1056.6 1828.4,1046.9 1830.6,1071.3 1832.8,1044.5 1835.0,1056.7 1837.3,1044.9 1839.5,1052.9 1841.7,1047.0 1844.0,1047.1 1846.2,1039.6 1848.4,1050.2 1850.7,1036.4 1852.9,1050.8 1855.1,1042.7 1857.3,1048.4 1859.6,1043.1 1861.8,1053.1 1864.0,1043.1 1866.3,1055.3 1868.5,1051.6 1870.7,1058.0 1872.9,1049.2 1875.2,1052.8 1877.4,1043.4 1879.6,1054.8 1881.9,1044.8 1884.1,1055.1 1886.3,1049.0 1888.5,1055.0 1890.8,1049.0 1893.0,1053.6 1895.2,1052.2 1897.5,1056.1 1899.7,1051.4 1901.9,1053.4 1904.1,1070.2 1906.4,1056.5 1908.6,1048.2 1910.8,1054.2 1913.1,1045.3 1915.3,1052.0 1917.5,1043.7 1919.8,1052.6 1922.0,1046.3 1924.2,1047.8 1926.4,1041.5 1928.7,1046.8 1930.9,1038.0 1933.1,1043.3 1935.4,1043.0 1937.6,1045.7 1939.8,1042.4 1942.0,1051.1 1944.3,1044.3 1946.5,1049.0 1948.7,1040.7 1951.0,1048.5 1953.2,1046.6 1955.4,1051.6 1957.6,1044.8 1959.9,1073.2 1962.1,1048.9 1964.3,1051.5 1966.6,1044.2 1968.8,1051.7 1971.0,1042.0 1973.3,1047.4 1975.5,1045.5 1977.7,1057.1 1979.9,1047.2 1982.2,1049.0 1984.4,1043.5 1986.6,1057.3 1988.9,1050.5 1991.1,1056.6 1993.3,1049.3 1995.5,1053.2 1997.8,1046.5 2000.0,1071.0" fill="none" stroke="#3598ec" stroke-width="2.9" stroke-linejoin="round" /><polyline points="1333.5,1050.6 1335.7,1054.5 1338.0,1041.9 1340.2,1060.7 1342.4,1048.1 1344.6,1056.1 1346.9,1074.5 1349.1,1060.8 1351.3,1048.6 1353.6,1057.3 1355.8,1049.7 1358.0,1060.6 1360.2,1044.7 1362.5,1071.4 1364.7,1048.2 1366.9,1056.0 1369.2,1048.6 1371.4,1060.4 1373.6,1046.6 1375.9,1056.1 1378.1,1028.3 1380.3,1062.0 1382.5,1041.0 1384.8,1058.6 1387.0,1049.0 1389.2,1055.2 1391.5,1049.7 1393.7,1063.8 1395.9,1050.3 1398.1,1054.3 1400.4,1051.1 1402.6,1057.0 1404.8,1042.4 1407.1,1063.9 1409.3,1045.5 1411.5,1057.0 1413.7,1040.0 1416.0,1056.3 1418.2,1045.9 1420.4,1064.5 1422.7,1042.3 1424.9,1058.7 1427.1,1049.7 1429.4,1065.4 1431.6,1051.3 1433.8,1059.0 1436.0,1048.1 1438.3,1055.5 1440.5,1041.0 1442.7,1028.0 1445.0,1049.5 1447.2,1060.0 1449.4,1048.6 1451.6,1062.8 1453.9,1045.5 1456.1,1064.9 1458.3,1045.0 1460.6,1074.3 1462.8,1041.1 1465.0,1064.2 1467.2,1045.8 1469.5,1060.0 1471.7,1051.2 1473.9,1061.2 1476.2,1040.2 1478.4,1057.1 1480.6,1048.5 1482.8,1071.4 1485.1,1044.1 1487.3,1064.0 1489.5,1048.4 1491.8,1074.6 1494.0,1048.1 1496.2,1054.2 1498.5,1040.6 1500.7,1063.7 1502.9,1047.5 1505.1,1075.0 1507.4,1070.5 1509.6,1056.8 1511.8,1048.4 1514.1,1065.2 1516.3,1046.0 1518.5,1055.1 1520.7,1048.8 1523.0,1062.3 1525.2,1049.7 1527.4,1064.3 1529.7,1045.4 1531.9,1060.8 1534.1,1051.1 1536.3,1060.5 1538.6,1051.4 1540.8,1071.1 1543.0,1043.0 1545.3,1058.4 1547.5,1074.9 1549.7,1033.8 1552.0,1043.6 1554.2,1055.4 1556.4,1051.2 1558.6,1057.1 1560.9,1049.8 1563.1,1059.9 1565.3,1034.7 1567.6,1055.6 1569.8,1041.7 1572.0,1057.4 1574.2,1047.3 1576.5,1063.7 1578.7,1045.5 1580.9,1063.4 1583.2,1071.2 1585.4,1069.9 1587.6,1048.0 1589.8,1057.5 1592.1,1049.0 1594.3,1065.5 1596.5,1047.5 1598.8,1064.3 1601.0,1047.1 1603.2,1055.5 1605.4,1048.3 1607.7,1063.8 1609.9,1041.1 1612.1,1064.7 1614.4,1050.2 1616.6,1062.4 1618.8,1051.0 1621.1,1057.5 1623.3,1072.5 1625.5,1030.1 1627.7,1041.2 1630.0,1062.2 1632.2,1046.6 1634.4,1054.4 1636.7,1042.2 1638.9,1057.6 1641.1,1048.0 1643.3,1058.8 1645.6,1049.0 1647.8,1058.6 1650.0,1040.7 1652.3,1054.4 1654.5,1030.4 1656.7,1065.2 1658.9,1072.8 1661.2,1058.2 1663.4,1075.6 1665.6,1062.7 1667.9,1044.3 1670.1,1054.1 1672.3,1051.2 1674.6,1058.5 1676.8,1049.3 1679.0,1061.0 1681.2,1050.5 1683.5,1054.4 1685.7,1040.0 1687.9,1062.2 1690.2,1043.7 1692.4,1063.7 1694.6,1049.1 1696.8,1060.7 1699.1,1048.8 1701.3,1059.5 1703.5,1050.1 1705.8,1058.3 1708.0,1040.5 1710.2,1058.3 1712.4,1043.9 1714.7,1056.2 1716.9,1050.7 1719.1,1055.1 1721.4,1047.9 1723.6,1058.8 1725.8,1043.0 1728.1,1063.5 1730.3,1051.3 1732.5,1061.2 1734.7,1045.4 1737.0,1065.2 1739.2,1069.9 1741.4,1063.6 1743.7,1041.7 1745.9,1060.0 1748.1,1072.2 1750.3,1055.4 1752.6,1046.6 1754.8,1025.2 1757.0,1042.4 1759.3,1055.5 1761.5,1051.0 1763.7,1072.6 1765.9,1041.5 1768.2,1065.4 1770.4,1042.3 1772.6,1055.9 1774.9,1045.6 1777.1,1074.7 1779.3,1041.1 1781.5,1061.4 1783.8,1041.2 1786.0,1063.2 1788.2,1042.6 1790.5,1057.0 1792.7,1034.2 1794.9,1059.9 1797.2,1029.3 1799.4,1060.8 1801.6,1049.9 1803.8,1061.4 1806.1,1051.3 1808.3,1059.2 1810.5,1050.9 1812.8,1026.3 1815.0,1044.4 1817.2,1057.6 1819.4,1021.7 1821.7,1059.3 1823.9,1042.8 1826.1,1060.4 1828.4,1044.0 1830.6,1056.7 1832.8,1041.3 1835.0,1062.0 1837.3,1043.4 1839.5,1057.6 1841.7,1033.1 1844.0,1071.4 1846.2,1050.7 1848.4,1070.3 1850.7,1049.1 1852.9,1061.4 1855.1,1050.3 1857.3,1054.3 1859.6,1047.7 1861.8,1054.4 1864.0,1043.3 1866.3,1063.5 1868.5,1027.2 1870.7,1059.7 1872.9,1048.2 1875.2,1070.8 1877.4,1047.3 1879.6,1031.6 1881.9,1047.1 1884.1,1062.7 1886.3,1049.7 1888.5,1059.1 1890.8,1041.2 1893.0,1063.8 1895.2,1045.4 1897.5,1062.4 1899.7,1040.1 1901.9,1061.4 1904.1,1042.3 1906.4,1055.7 1908.6,1046.5 1910.8,1062.4 1913.1,1043.6 1915.3,1055.2 1917.5,1048.6 1919.8,1061.8 1922.0,1047.0 1924.2,1055.9 1926.4,1044.8 1928.7,1063.6 1930.9,1043.5 1933.1,1074.1 1935.4,1046.6 1937.6,1062.6 1939.8,1046.9 1942.0,1061.4 1944.3,1047.4 1946.5,1057.4 1948.7,1041.6 1951.0,1023.6 1953.2,1045.9 1955.4,1064.8 1957.6,1042.4 1959.9,1065.0 1962.1,1048.7 1964.3,1063.2 1966.6,1043.7 1968.8,1062.0 1971.0,1045.0 1973.3,1054.7 1975.5,1045.2 1977.7,1060.5 1979.9,1071.8 1982.2,1061.9 1984.4,1045.8 1986.6,1057.9 1988.9,1042.5 1991.1,1063.6 1993.3,1048.3 1995.5,1057.8 1997.8,1071.2 2000.0,1054.1" fill="none" stroke="#a4a8b0" stroke-width="2.9" stroke-linejoin="round" /></svg>
<div class="t" style="left:2048.5px;top:871.3px;font-size:27.65px;font-weight:400;color:#1c2b34;">Total Time</div>
<svg class="a" style="left:2705.2px;top:866.5px;" width="27" height="29" viewBox="0 0 27 29"><path d="M1.3 16.5 V26.7 H25.2 V16.5" fill="none" stroke="#66737a" stroke-width="2.5"/><path d="M13.1 19 V2" stroke="#66737a" stroke-width="2.5"/><path d="M5.3 9.3 L13.1 1.5 L20.9 9.3" fill="none" stroke="#66737a" stroke-width="2.5"/></svg>
<svg class="a" style="left:2762.0px;top:869.5px;" width="25" height="25" viewBox="0 0 25 25"><path d="M1.2 8.5 V1.2 H8.5 M1.2 1.2 L9.5 9.5" fill="none" stroke="#66737a" stroke-width="2.5"/><path d="M16.5 1.2 H23.8 V8.5 M23.8 1.2 L15.5 9.5" fill="none" stroke="#66737a" stroke-width="2.5"/><path d="M1.2 16.5 V23.8 H8.5 M1.2 23.8 L9.5 15.5" fill="none" stroke="#66737a" stroke-width="2.5"/><path d="M16.5 23.8 H23.8 V16.5 M23.8 23.8 L15.5 15.5" fill="none" stroke="#66737a" stroke-width="2.5"/></svg>
<div class="a" style="left:2041.8px;top:918.0px;width:768.2px;height:2.0px;background:#e3e6ea"></div>
<div class="a" style="left:2133.5px;top:995.7px;width:667.0px;height:2.4px;background:#9aa0a7"></div>
<div class="a" style="left:2133.5px;top:1114.2px;width:667.0px;height:2.0px;background:#e6e8eb"></div>
<div class="t" style="left:2092.5px;top:987.4px;font-size:19.2px;font-weight:400;color:#2c3a44;">100</div>
<div class="t" style="left:2103.1px;top:1105.9px;font-size:19.2px;font-weight:400;color:#2c3a44;">50</div>
<div class="t" style="left:2113.8px;top:1223.3px;font-size:19.2px;font-weight:400;color:#2c3a44;">0</div>
<div class="a" style="left:2133.5px;top:1231.6px;width:667.1px;height:2.0px;background:#5c666e"></div>
<div class="a" style="left:2132.5px;top:1232.6px;width:2.0px;height:9.0px;background:#5c666e"></div>
<div class="t" style="left:2109.2px;top:1246.2px;font-size:19.4px;font-weight:400;color:#2c3a44;">12:00</div>
<div class="a" style="left:2300.0px;top:1232.6px;width:2.0px;height:9.0px;background:#5c666e"></div>
<div class="t" style="left:2276.7px;top:1246.2px;font-size:19.4px;font-weight:400;color:#2c3a44;">18:00</div>
<div class="a" style="left:2467.0px;top:1232.6px;width:2.0px;height:9.0px;background:#5c666e"></div>
<div class="t" style="left:2434.7px;top:1246.2px;font-size:19.4px;font-weight:400;color:#2c3a44;">Wed 18</div>
<div class="a" style="left:2634.5px;top:1232.6px;width:2.0px;height:9.0px;background:#5c666e"></div>
<div class="t" style="left:2611.2px;top:1246.2px;font-size:19.4px;font-weight:400;color:#2c3a44;">06:00</div>
<div class="t" style="left:2144.0px;top:969.4px;font-size:18.38px;font-weight:400;color:#8d959b;">100%</div>
<div class="t" style="left:2021.2px;top:1098.7px;font-size:22.52px;color:#8d959b;transform:rotate(-90deg);transform-origin:38.8px 11.3px">Percent</div>
<div class="a" style="left:2111.0px;top:1299.5px;width:21.5px;height:20.5px;background:#3598ec;border-radius:3px"></div>
<div class="t" style="left:2144.0px;top:1298.6px;font-size:22.92px;font-weight:400;color:#1c2b34;">This query</div>
<div class="a" style="left:2284.5px;top:1299.5px;width:21.5px;height:20.5px;background:#a4a8b0;border-radius:3px"></div>
<div class="t" style="left:2317.0px;top:1298.3px;font-size:23.32px;font-weight:400;color:#1c2b34;">All other queries</div>
<svg class="a" style="left:0;top:0" width="3800" height="1930"><polyline points="2133.5,1028.4 2135.7,1018.2 2137.9,1060.9 2140.1,1047.5 2142.3,1058.8 2144.5,1069.8 2146.7,1060.2 2148.9,1074.2 2151.1,1096.8 2153.3,1101.5 2155.5,1073.6 2157.7,1082.7 2159.9,1046.1 2162.1,1050.9 2164.3,1035.3 2166.5,1053.1 2168.7,1042.7 2170.9,1054.3 2173.1,1039.8 2175.3,1040.5 2177.5,1069.9 2179.7,1111.0 2181.9,1069.3 2184.1,1031.5 2186.3,1031.9 2188.5,1037.5 2190.7,1049.8 2192.9,1021.8 2195.1,1025.3 2197.3,1040.1 2199.5,1024.7 2201.7,1038.0 2203.9,1033.7 2206.1,1071.4 2208.3,1084.1 2210.5,1055.8 2212.7,1034.2 2214.9,1032.6 2217.1,1042.8 2219.3,1043.2 2221.5,1042.3 2223.7,1048.9 2225.9,1042.7 2228.1,1032.9 2230.3,1040.2 2232.5,1055.6 2234.7,1089.7 2236.9,1089.1 2239.1,1053.8 2241.3,1061.6 2243.5,1047.9 2245.7,1046.5 2247.9,1051.6 2250.1,1057.0 2252.3,1055.5 2254.5,1043.5 2256.7,1046.6 2258.9,1053.3 2261.1,1082.9 2263.3,1098.8 2265.5,1063.7 2267.7,1053.6 2269.9,1090.9 2272.1,1044.0 2274.3,1039.4 2276.5,1063.6 2278.7,1057.8 2280.9,1046.9 2283.1,1060.8 2285.3,1054.2 2287.5,1065.9 2289.7,1098.6 2291.9,1112.4 2294.1,1077.1 2296.3,1081.5 2298.5,1042.8 2300.7,1045.1 2302.9,1049.7 2305.1,1040.9 2307.3,1082.2 2309.5,1067.4 2311.7,1048.8 2313.9,1053.8 2316.1,1069.6 2318.3,1102.5 2320.5,1095.1 2322.7,1055.3 2324.9,1056.7 2327.1,1055.0 2329.3,1046.2 2331.5,1039.4 2333.7,1033.7 2335.9,1050.2 2338.1,1031.5 2340.3,1042.1 2342.5,1039.1 2344.7,1064.0 2346.9,1100.8 2349.1,1053.3 2351.3,1018.1 2353.5,1029.9 2355.7,1036.2 2357.9,1035.7 2360.1,1033.8 2362.3,1042.0 2364.5,1037.9 2366.7,1026.1 2368.9,1041.4 2371.1,1033.2 2373.3,1076.4 2375.5,1088.9 2377.7,1048.9 2379.9,1049.1 2382.1,1039.1 2384.3,1036.0 2386.5,1044.2 2388.7,1026.2 2390.9,1016.1 2393.1,1029.8 2395.3,1025.2 2397.5,1038.6 2399.7,1045.6 2401.9,1104.1 2404.1,1081.1 2406.3,1039.2 2408.5,1063.9 2410.7,1034.0 2412.9,1037.0 2415.1,1028.5 2417.3,1028.5 2419.5,1022.4 2421.7,1036.8 2423.9,1037.9 2426.1,1041.5 2428.3,1077.2 2430.5,1092.7 2432.7,1053.9 2434.9,1024.9 2437.1,1046.9 2439.3,1054.7 2441.5,1027.5 2443.7,1026.3 2445.9,1022.0 2448.1,1026.4 2450.3,1034.3 2452.5,1037.5 2454.7,1056.3 2456.9,1098.7 2459.1,1098.1 2461.3,1057.0 2463.5,1053.3 2465.7,1028.9 2467.9,1048.5 2470.1,1050.2 2472.3,1035.5 2474.5,1042.6 2476.7,1052.8 2478.9,1039.6 2481.1,1033.6 2483.3,1063.2 2485.5,1106.1 2487.7,1088.6 2489.9,1031.7 2492.1,1032.5 2494.3,1050.9 2496.5,1044.5 2498.7,1033.7 2500.9,1043.5 2503.1,1034.4 2505.3,1037.3 2507.5,1031.5 2509.7,1035.2 2511.9,1070.3 2514.1,1088.1 2516.3,1047.9 2518.5,1027.5 2520.7,1040.3 2522.9,1027.6 2525.1,1021.2 2527.3,1034.8 2529.5,1025.7 2531.7,1027.8 2533.9,1064.1 2536.1,1022.4 2538.3,1051.1 2540.5,1100.2 2542.7,1086.8 2544.9,1043.5 2547.1,1024.5 2549.3,1037.9 2551.5,1041.2 2553.7,1031.8 2555.9,1035.1 2558.1,1030.5 2560.3,1039.7 2562.5,1044.6 2564.7,1035.2 2566.9,1069.0 2569.1,1108.3 2571.3,1060.2 2573.5,1044.0 2575.7,1034.8 2577.9,1018.0 2580.1,1032.1 2582.3,1031.7 2584.5,1025.4 2586.7,1073.5 2588.9,1046.1 2591.1,1051.5 2593.3,1037.7 2595.5,1078.3 2597.7,1075.8 2599.9,1053.9 2602.1,1038.9 2604.3,1036.4 2606.5,1056.6 2608.7,1044.7 2610.9,1043.3 2613.1,1044.6 2615.3,1045.5 2617.5,1060.9 2619.7,1064.0 2621.9,1076.4 2624.1,1103.1 2626.3,1096.6 2628.5,1062.7 2630.7,1048.9 2632.9,1047.6 2635.1,1058.6 2637.3,1051.7 2639.5,1045.5 2641.7,1047.3 2643.9,1039.0 2646.1,1034.3 2648.3,1035.9 2650.5,1076.4 2652.7,1105.4 2654.9,1053.8 2657.1,1035.6 2659.3,1022.6 2661.5,1035.4 2663.7,1034.9 2665.9,1027.0 2668.1,1042.5 2670.3,1030.1 2672.5,1029.6 2674.7,1032.0 2676.9,1054.0 2679.1,1105.1 2681.3,1107.0 2683.5,1055.9 2685.7,1041.4 2687.9,1036.4 2690.1,1055.2 2692.3,1034.2 2694.5,1060.8 2696.7,1041.5 2698.9,1044.5 2701.1,1037.7 2703.3,1029.7 2705.5,1059.3 2707.7,1088.2 2709.9,1073.0 2712.1,1037.2 2714.3,1039.4 2716.5,1025.9 2718.7,1026.2 2720.9,1022.8 2723.1,1031.7 2725.3,1038.1 2727.5,1035.8 2729.7,1024.2 2731.9,1026.4 2734.1,1078.1 2736.3,1107.3 2738.5,1057.8 2740.7,1030.0 2742.9,1043.3 2745.1,1031.8 2747.3,1026.6 2749.5,1044.5 2751.7,1058.8 2753.9,1021.9 2756.1,1032.7 2758.3,1030.5 2760.5,1055.9 2762.7,1097.2 2764.9,1087.6 2767.1,1043.8 2769.3,1027.3 2771.5,1026.9 2773.7,1035.2 2775.9,1027.3 2778.1,1061.6 2780.3,1058.7 2782.5,1035.1 2784.7,1034.7 2786.9,1033.2 2789.1,1062.9 2791.3,1105.5 2793.5,1064.1 2795.7,1039.6 2797.9,1055.5 2800.1,1074.0" fill="none" stroke="#a4a8b0" stroke-width="2.8" stroke-linejoin="round" /><polyline points="2133.5,1209.0 2135.7,1220.8 2137.9,1186.0 2140.1,1184.2 2142.3,1184.8 2144.5,1160.3 2146.7,1182.3 2148.9,1170.3 2151.1,1137.4 2153.3,1138.1 2155.5,1174.0 2157.7,1158.6 2159.9,1193.4 2162.1,1183.1 2164.3,1195.1 2166.5,1182.9 2168.7,1194.3 2170.9,1178.8 2173.1,1195.3 2175.3,1191.4 2177.5,1172.8 2179.7,1131.0 2181.9,1164.5 2184.1,1202.4 2186.3,1207.1 2188.5,1200.2 2190.7,1197.2 2192.9,1214.1 2195.1,1209.6 2197.3,1205.9 2199.5,1207.3 2201.7,1202.0 2203.9,1201.9 2206.1,1173.3 2208.3,1155.5 2210.5,1187.8 2212.7,1198.2 2214.9,1209.2 2217.1,1197.8 2219.3,1194.8 2221.5,1201.5 2223.7,1196.1 2225.9,1188.8 2228.1,1201.9 2230.3,1195.9 2232.5,1177.6 2234.7,1140.8 2236.9,1145.5 2239.1,1179.3 2241.3,1180.9 2243.5,1189.8 2245.7,1185.0 2247.9,1183.8 2250.1,1181.1 2252.3,1180.6 2254.5,1188.9 2256.7,1184.0 2258.9,1176.2 2261.1,1165.1 2263.3,1144.7 2265.5,1167.2 2267.7,1189.3 2269.9,1156.9 2272.1,1196.0 2274.3,1192.0 2276.5,1175.0 2278.7,1179.6 2280.9,1186.0 2283.1,1178.8 2285.3,1175.2 2287.5,1180.8 2289.7,1142.9 2291.9,1128.7 2294.1,1169.9 2296.3,1160.1 2298.5,1191.3 2300.7,1188.9 2302.9,1182.3 2305.1,1188.9 2307.3,1161.7 2309.5,1177.7 2311.7,1186.0 2313.9,1179.0 2316.1,1171.7 2318.3,1142.8 2320.5,1151.7 2322.7,1177.2 2324.9,1187.4 2327.1,1190.0 2329.3,1197.1 2331.5,1196.1 2333.7,1199.1 2335.9,1194.7 2338.1,1203.8 2340.3,1194.1 2342.5,1200.6 2344.7,1172.3 2346.9,1144.2 2349.1,1180.5 2351.3,1212.0 2353.5,1210.1 2355.7,1205.0 2357.9,1209.1 2360.1,1208.8 2362.3,1204.4 2364.5,1209.3 2366.7,1212.5 2368.9,1197.3 2371.1,1199.1 2373.3,1158.6 2375.5,1151.4 2377.7,1181.9 2379.9,1193.2 2382.1,1193.3 2384.3,1201.7 2386.5,1203.4 2388.7,1204.8 2390.9,1214.0 2393.1,1207.8 2395.3,1207.7 2397.5,1204.4 2399.7,1183.8 2401.9,1141.1 2404.1,1164.4 2406.3,1205.0 2408.5,1173.4 2410.7,1200.6 2412.9,1204.8 2415.1,1210.5 2417.3,1208.8 2419.5,1213.3 2421.7,1200.8 2423.9,1204.0 2426.1,1203.4 2428.3,1169.2 2430.5,1139.7 2432.7,1181.0 2434.9,1212.8 2437.1,1193.0 2439.3,1181.2 2441.5,1205.5 2443.7,1204.7 2445.9,1213.5 2448.1,1211.6 2450.3,1213.3 2452.5,1208.9 2454.7,1189.3 2456.9,1149.0 2459.1,1149.4 2461.3,1184.0 2463.5,1191.3 2465.7,1201.5 2467.9,1193.5 2470.1,1190.6 2472.3,1199.4 2474.5,1197.4 2476.7,1194.5 2478.9,1198.8 2481.1,1207.9 2483.3,1171.8 2485.5,1129.7 2487.7,1157.4 2489.9,1198.1 2492.1,1200.3 2494.3,1191.2 2496.5,1193.2 2498.7,1197.2 2500.9,1198.3 2503.1,1202.0 2505.3,1203.0 2507.5,1205.6 2509.7,1204.1 2511.9,1169.7 2514.1,1148.6 2516.3,1183.5 2518.5,1205.2 2520.7,1205.8 2522.9,1212.1 2525.1,1210.2 2527.3,1210.7 2529.5,1208.3 2531.7,1203.3 2533.9,1175.2 2536.1,1211.7 2538.3,1187.5 2540.5,1139.5 2542.7,1146.7 2544.9,1196.6 2547.1,1206.9 2549.3,1201.1 2551.5,1199.2 2553.7,1199.0 2555.9,1201.9 2558.1,1200.2 2560.3,1197.9 2562.5,1201.0 2564.7,1204.5 2566.9,1173.8 2569.1,1135.3 2571.3,1171.2 2573.5,1204.0 2575.7,1208.1 2577.9,1213.2 2580.1,1212.9 2582.3,1205.0 2584.5,1207.1 2586.7,1173.9 2588.9,1193.8 2591.1,1192.5 2593.3,1194.2 2595.5,1165.6 2597.7,1154.6 2599.9,1179.9 2602.1,1197.5 2604.3,1193.2 2606.5,1183.9 2608.7,1188.7 2610.9,1191.6 2613.1,1198.0 2615.3,1191.9 2617.5,1185.1 2619.7,1177.0 2621.9,1169.4 2624.1,1136.8 2626.3,1150.0 2628.5,1183.1 2630.7,1183.5 2632.9,1195.8 2635.1,1177.2 2637.3,1192.0 2639.5,1196.6 2641.7,1197.6 2643.9,1192.6 2646.1,1202.0 2648.3,1207.3 2650.5,1170.8 2652.7,1137.5 2654.9,1176.3 2657.1,1205.1 2659.3,1208.6 2661.5,1204.2 2663.7,1209.6 2665.9,1204.4 2668.1,1204.3 2670.3,1211.9 2672.5,1204.5 2674.7,1201.0 2676.9,1183.7 2679.1,1140.1 2681.3,1133.3 2683.5,1175.5 2685.7,1188.2 2687.9,1194.9 2690.1,1189.2 2692.3,1198.6 2694.5,1178.9 2696.7,1193.3 2698.9,1197.8 2701.1,1198.8 2703.3,1202.3 2705.5,1186.5 2707.7,1151.2 2709.9,1169.3 2712.1,1207.4 2714.3,1207.8 2716.5,1203.7 2718.7,1209.6 2720.9,1209.4 2723.1,1207.1 2725.3,1207.7 2727.5,1208.6 2729.7,1205.8 2731.9,1206.4 2734.1,1166.6 2736.3,1134.8 2738.5,1178.9 2740.7,1208.3 2742.9,1189.0 2745.1,1213.4 2747.3,1210.1 2749.5,1201.3 2751.7,1182.0 2753.9,1208.8 2756.1,1202.9 2758.3,1202.9 2760.5,1190.3 2762.7,1143.3 2764.9,1142.6 2767.1,1188.7 2769.3,1208.8 2771.5,1211.2 2773.7,1205.0 2775.9,1209.3 2778.1,1174.4 2780.3,1170.7 2782.5,1205.1 2784.7,1200.9 2786.9,1196.5 2789.1,1175.1 2791.3,1142.4 2793.5,1166.1 2795.7,1192.4 2797.9,1186.5 2800.1,1160.4" fill="none" stroke="#3598ec" stroke-width="2.8" stroke-linejoin="round" /></svg>
<div class="t" style="left:2849.0px;top:872.7px;font-size:26.04px;font-weight:400;color:#1c2b34;">Requests</div>
<svg class="a" style="left:3505.0px;top:866.5px;" width="27" height="29" viewBox="0 0 27 29"><path d="M1.3 16.5 V26.7 H25.2 V16.5" fill="none" stroke="#66737a" stroke-width="2.5"/><path d="M13.1 19 V2" stroke="#66737a" stroke-width="2.5"/><path d="M5.3 9.3 L13.1 1.5 L20.9 9.3" fill="none" stroke="#66737a" stroke-width="2.5"/></svg>
<svg class="a" style="left:3562.0px;top:869.5px;" width="25" height="25" viewBox="0 0 25 25"><path d="M1.2 8.5 V1.2 H8.5 M1.2 1.2 L9.5 9.5" fill="none" stroke="#66737a" stroke-width="2.5"/><path d="M16.5 1.2 H23.8 V8.5 M23.8 1.2 L15.5 9.5" fill="none" stroke="#66737a" stroke-width="2.5"/><path d="M1.2 16.5 V23.8 H8.5 M1.2 23.8 L9.5 15.5" fill="none" stroke="#66737a" stroke-width="2.5"/><path d="M16.5 23.8 H23.8 V16.5 M23.8 23.8 L15.5 15.5" fill="none" stroke="#66737a" stroke-width="2.5"/></svg>
<div class="a" style="left:2842.2px;top:918.0px;width:767.8px;height:2.0px;background:#e3e6ea"></div>
<div class="a" style="left:2933.2px;top:949.9px;width:667.0px;height:2.0px;background:#e6e8eb"></div>
<div class="a" style="left:2933.2px;top:1006.0px;width:667.0px;height:2.0px;background:#e6e8eb"></div>
<div class="a" style="left:2933.2px;top:1062.6px;width:667.0px;height:2.0px;background:#e6e8eb"></div>
<div class="a" style="left:2933.2px;top:1119.2px;width:667.0px;height:2.0px;background:#e6e8eb"></div>
<div class="a" style="left:2933.2px;top:1175.4px;width:667.0px;height:2.0px;background:#e6e8eb"></div>
<div class="t" style="left:2865.3px;top:941.6px;font-size:19.2px;font-weight:400;color:#2c3a44;">1000M</div>
<div class="t" style="left:2876.0px;top:997.7px;font-size:19.2px;font-weight:400;color:#2c3a44;">800M</div>
<div class="t" style="left:2876.0px;top:1054.3px;font-size:19.2px;font-weight:400;color:#2c3a44;">600M</div>
<div class="t" style="left:2876.0px;top:1110.9px;font-size:19.2px;font-weight:400;color:#2c3a44;">400M</div>
<div class="t" style="left:2876.0px;top:1167.1px;font-size:19.2px;font-weight:400;color:#2c3a44;">200M</div>
<div class="t" style="left:2897.3px;top:1223.3px;font-size:19.2px;font-weight:400;color:#2c3a44;">0M</div>
<div class="t" style="left:2822.5px;top:1098.7px;font-size:22.56px;color:#8d959b;transform:rotate(-90deg);transform-origin:39.5px 11.3px">Queries</div>
<svg class="a" style="left:0;top:0" width="3800" height="1930"><rect x="2933.9" y="1094.8" width="7.9" height="137.8" fill="#a4a8b0"/><rect x="2933.9" y="1077.6" width="7.9" height="17.2" fill="#3598ec"/><rect x="2943.2" y="1090.8" width="7.9" height="141.8" fill="#a4a8b0"/><rect x="2943.2" y="1025.7" width="7.9" height="65.1" fill="#3598ec"/><rect x="2952.4" y="1087.1" width="7.9" height="145.5" fill="#a4a8b0"/><rect x="2952.4" y="1053.5" width="7.9" height="33.7" fill="#3598ec"/><rect x="2961.7" y="1091.1" width="7.9" height="141.5" fill="#a4a8b0"/><rect x="2961.7" y="1059.8" width="7.9" height="31.3" fill="#3598ec"/><rect x="2971.0" y="1089.8" width="7.9" height="142.8" fill="#a4a8b0"/><rect x="2971.0" y="1025.7" width="7.9" height="64.0" fill="#3598ec"/><rect x="2980.2" y="1089.8" width="7.9" height="142.8" fill="#a4a8b0"/><rect x="2980.2" y="1049.8" width="7.9" height="40.0" fill="#3598ec"/><rect x="2989.5" y="1089.8" width="7.9" height="142.8" fill="#a4a8b0"/><rect x="2989.5" y="1063.8" width="7.9" height="26.0" fill="#3598ec"/><rect x="2998.8" y="1091.1" width="7.9" height="141.5" fill="#a4a8b0"/><rect x="2998.8" y="1038.3" width="7.9" height="52.8" fill="#3598ec"/><rect x="3008.0" y="1097.4" width="7.9" height="135.2" fill="#a4a8b0"/><rect x="3008.0" y="1067.7" width="7.9" height="29.7" fill="#3598ec"/><rect x="3017.3" y="1101.0" width="7.9" height="131.6" fill="#a4a8b0"/><rect x="3017.3" y="1071.3" width="7.9" height="29.7" fill="#3598ec"/><rect x="3026.6" y="1103.2" width="7.9" height="129.4" fill="#a4a8b0"/><rect x="3026.6" y="1038.3" width="7.9" height="64.9" fill="#3598ec"/><rect x="3035.8" y="1089.8" width="7.9" height="142.8" fill="#a4a8b0"/><rect x="3035.8" y="1071.3" width="7.9" height="18.5" fill="#3598ec"/><rect x="3045.1" y="1089.8" width="7.9" height="142.8" fill="#a4a8b0"/><rect x="3045.1" y="1051.9" width="7.9" height="37.9" fill="#3598ec"/><rect x="3054.3" y="1093.1" width="7.9" height="139.5" fill="#a4a8b0"/><rect x="3054.3" y="1035.9" width="7.9" height="57.2" fill="#3598ec"/><rect x="3063.6" y="1089.8" width="7.9" height="142.8" fill="#a4a8b0"/><rect x="3063.6" y="1049.8" width="7.9" height="40.0" fill="#3598ec"/><rect x="3072.9" y="1091.1" width="7.9" height="141.5" fill="#a4a8b0"/><rect x="3072.9" y="1056.1" width="7.9" height="35.0" fill="#3598ec"/><rect x="3082.1" y="1094.8" width="7.9" height="137.8" fill="#a4a8b0"/><rect x="3082.1" y="1019.8" width="7.9" height="75.0" fill="#3598ec"/><rect x="3091.4" y="1097.4" width="7.9" height="135.2" fill="#a4a8b0"/><rect x="3091.4" y="1051.9" width="7.9" height="45.5" fill="#3598ec"/><rect x="3100.7" y="1085.1" width="7.9" height="147.5" fill="#a4a8b0"/><rect x="3100.7" y="1049.8" width="7.9" height="35.4" fill="#3598ec"/><rect x="3109.9" y="1094.8" width="7.9" height="137.8" fill="#a4a8b0"/><rect x="3109.9" y="1030.0" width="7.9" height="64.8" fill="#3598ec"/><rect x="3119.2" y="1091.1" width="7.9" height="141.5" fill="#a4a8b0"/><rect x="3119.2" y="1051.9" width="7.9" height="39.2" fill="#3598ec"/><rect x="3128.5" y="1094.8" width="7.9" height="137.8" fill="#a4a8b0"/><rect x="3128.5" y="1069.6" width="7.9" height="25.2" fill="#3598ec"/><rect x="3137.7" y="1097.4" width="7.9" height="135.2" fill="#a4a8b0"/><rect x="3137.7" y="1042.0" width="7.9" height="55.4" fill="#3598ec"/><rect x="3147.0" y="1091.1" width="7.9" height="141.5" fill="#a4a8b0"/><rect x="3147.0" y="1051.9" width="7.9" height="39.2" fill="#3598ec"/><rect x="3156.3" y="1090.0" width="7.9" height="142.6" fill="#a4a8b0"/><rect x="3156.3" y="1053.5" width="7.9" height="36.6" fill="#3598ec"/><rect x="3165.5" y="1091.1" width="7.9" height="141.5" fill="#a4a8b0"/><rect x="3165.5" y="1035.9" width="7.9" height="55.2" fill="#3598ec"/><rect x="3174.8" y="1091.1" width="7.9" height="141.5" fill="#a4a8b0"/><rect x="3174.8" y="1053.5" width="7.9" height="37.6" fill="#3598ec"/><rect x="3184.1" y="1091.1" width="7.9" height="141.5" fill="#a4a8b0"/><rect x="3184.1" y="1067.7" width="7.9" height="23.4" fill="#3598ec"/><rect x="3193.3" y="1090.0" width="7.9" height="142.6" fill="#a4a8b0"/><rect x="3193.3" y="1024.0" width="7.9" height="66.0" fill="#3598ec"/><rect x="3202.6" y="1093.1" width="7.9" height="139.5" fill="#a4a8b0"/><rect x="3202.6" y="1066.0" width="7.9" height="27.1" fill="#3598ec"/><rect x="3211.9" y="1085.1" width="7.9" height="147.5" fill="#a4a8b0"/><rect x="3211.9" y="1056.1" width="7.9" height="29.0" fill="#3598ec"/><rect x="3221.1" y="1094.8" width="7.9" height="137.8" fill="#a4a8b0"/><rect x="3221.1" y="1043.6" width="7.9" height="51.2" fill="#3598ec"/><rect x="3230.4" y="1085.1" width="7.9" height="147.5" fill="#a4a8b0"/><rect x="3230.4" y="1053.5" width="7.9" height="31.7" fill="#3598ec"/><rect x="3239.7" y="1091.1" width="7.9" height="141.5" fill="#a4a8b0"/><rect x="3239.7" y="1059.8" width="7.9" height="31.3" fill="#3598ec"/><rect x="3248.9" y="1094.8" width="7.9" height="137.8" fill="#a4a8b0"/><rect x="3248.9" y="1042.0" width="7.9" height="52.8" fill="#3598ec"/><rect x="3258.2" y="1094.8" width="7.9" height="137.8" fill="#a4a8b0"/><rect x="3258.2" y="1056.1" width="7.9" height="38.7" fill="#3598ec"/><rect x="3267.4" y="1087.1" width="7.9" height="145.5" fill="#a4a8b0"/><rect x="3267.4" y="1057.7" width="7.9" height="29.4" fill="#3598ec"/><rect x="3276.7" y="1089.1" width="7.9" height="143.5" fill="#a4a8b0"/><rect x="3276.7" y="1018.1" width="7.9" height="71.0" fill="#3598ec"/><rect x="3286.0" y="1094.8" width="7.9" height="137.8" fill="#a4a8b0"/><rect x="3286.0" y="1053.5" width="7.9" height="41.3" fill="#3598ec"/><rect x="3295.2" y="1087.1" width="7.9" height="145.5" fill="#a4a8b0"/><rect x="3295.2" y="1059.8" width="7.9" height="27.3" fill="#3598ec"/><rect x="3304.5" y="1093.1" width="7.9" height="139.5" fill="#a4a8b0"/><rect x="3304.5" y="1028.1" width="7.9" height="64.9" fill="#3598ec"/><rect x="3313.8" y="1091.1" width="7.9" height="141.5" fill="#a4a8b0"/><rect x="3313.8" y="1056.1" width="7.9" height="35.0" fill="#3598ec"/><rect x="3323.0" y="1094.8" width="7.9" height="137.8" fill="#a4a8b0"/><rect x="3323.0" y="1062.0" width="7.9" height="32.7" fill="#3598ec"/><rect x="3332.3" y="1094.8" width="7.9" height="137.8" fill="#a4a8b0"/><rect x="3332.3" y="1030.0" width="7.9" height="64.8" fill="#3598ec"/><rect x="3341.6" y="1089.1" width="7.9" height="143.5" fill="#a4a8b0"/><rect x="3341.6" y="1047.5" width="7.9" height="41.6" fill="#3598ec"/><rect x="3350.8" y="1093.1" width="7.9" height="139.5" fill="#a4a8b0"/><rect x="3350.8" y="1051.9" width="7.9" height="41.2" fill="#3598ec"/><rect x="3360.1" y="1093.1" width="7.9" height="139.5" fill="#a4a8b0"/><rect x="3360.1" y="1025.7" width="7.9" height="67.3" fill="#3598ec"/><rect x="3369.4" y="1089.1" width="7.9" height="143.5" fill="#a4a8b0"/><rect x="3369.4" y="1057.7" width="7.9" height="31.4" fill="#3598ec"/><rect x="3378.6" y="1093.1" width="7.9" height="139.5" fill="#a4a8b0"/><rect x="3378.6" y="1059.8" width="7.9" height="33.3" fill="#3598ec"/><rect x="3387.9" y="1094.8" width="7.9" height="137.8" fill="#a4a8b0"/><rect x="3387.9" y="1035.9" width="7.9" height="58.9" fill="#3598ec"/><rect x="3397.2" y="1091.1" width="7.9" height="141.5" fill="#a4a8b0"/><rect x="3397.2" y="1059.8" width="7.9" height="31.3" fill="#3598ec"/><rect x="3406.4" y="1091.1" width="7.9" height="141.5" fill="#a4a8b0"/><rect x="3406.4" y="1062.0" width="7.9" height="29.0" fill="#3598ec"/><rect x="3415.7" y="1094.8" width="7.9" height="137.8" fill="#a4a8b0"/><rect x="3415.7" y="1039.9" width="7.9" height="54.9" fill="#3598ec"/><rect x="3425.0" y="1085.1" width="7.9" height="147.5" fill="#a4a8b0"/><rect x="3425.0" y="1035.9" width="7.9" height="49.2" fill="#3598ec"/><rect x="3434.2" y="1083.2" width="7.9" height="149.4" fill="#a4a8b0"/><rect x="3434.2" y="1049.8" width="7.9" height="33.4" fill="#3598ec"/><rect x="3443.5" y="1094.8" width="7.9" height="137.8" fill="#a4a8b0"/><rect x="3443.5" y="1025.7" width="7.9" height="69.0" fill="#3598ec"/><rect x="3452.8" y="1085.1" width="7.9" height="147.5" fill="#a4a8b0"/><rect x="3452.8" y="1047.5" width="7.9" height="37.6" fill="#3598ec"/><rect x="3462.0" y="1089.8" width="7.9" height="142.8" fill="#a4a8b0"/><rect x="3462.0" y="1062.0" width="7.9" height="27.7" fill="#3598ec"/><rect x="3471.3" y="1081.2" width="7.9" height="151.4" fill="#a4a8b0"/><rect x="3471.3" y="1021.8" width="7.9" height="59.4" fill="#3598ec"/><rect x="3480.6" y="1087.1" width="7.9" height="145.5" fill="#a4a8b0"/><rect x="3480.6" y="1056.1" width="7.9" height="31.0" fill="#3598ec"/><rect x="3489.8" y="1085.1" width="7.9" height="147.5" fill="#a4a8b0"/><rect x="3489.8" y="1042.0" width="7.9" height="43.2" fill="#3598ec"/><rect x="3499.1" y="1087.1" width="7.9" height="145.5" fill="#a4a8b0"/><rect x="3499.1" y="1030.0" width="7.9" height="57.2" fill="#3598ec"/><rect x="3508.3" y="1081.2" width="7.9" height="151.4" fill="#a4a8b0"/><rect x="3508.3" y="1051.9" width="7.9" height="29.3" fill="#3598ec"/><rect x="3517.6" y="1089.1" width="7.9" height="143.5" fill="#a4a8b0"/><rect x="3517.6" y="1059.8" width="7.9" height="29.3" fill="#3598ec"/><rect x="3526.9" y="1093.1" width="7.9" height="139.5" fill="#a4a8b0"/><rect x="3526.9" y="1024.0" width="7.9" height="69.0" fill="#3598ec"/><rect x="3536.1" y="1085.1" width="7.9" height="147.5" fill="#a4a8b0"/><rect x="3536.1" y="1051.9" width="7.9" height="33.3" fill="#3598ec"/><rect x="3545.4" y="1093.1" width="7.9" height="139.5" fill="#a4a8b0"/><rect x="3545.4" y="1056.1" width="7.9" height="37.0" fill="#3598ec"/><rect x="3554.7" y="1089.8" width="7.9" height="142.8" fill="#a4a8b0"/><rect x="3554.7" y="1030.0" width="7.9" height="59.8" fill="#3598ec"/><rect x="3563.9" y="1091.1" width="7.9" height="141.5" fill="#a4a8b0"/><rect x="3563.9" y="1047.5" width="7.9" height="43.6" fill="#3598ec"/><rect x="3573.2" y="1087.1" width="7.9" height="145.5" fill="#a4a8b0"/><rect x="3573.2" y="1059.8" width="7.9" height="27.3" fill="#3598ec"/><rect x="3582.5" y="1104.9" width="7.9" height="127.7" fill="#a4a8b0"/><rect x="3582.5" y="1033.7" width="7.9" height="71.3" fill="#3598ec"/><rect x="3591.7" y="1124.8" width="7.9" height="107.8" fill="#a4a8b0"/><rect x="3591.7" y="1105.0" width="7.9" height="19.8" fill="#3598ec"/></svg>
<div class="a" style="left:2933.2px;top:1231.6px;width:667.1px;height:2.0px;background:#5c666e"></div>
<div class="a" style="left:2932.2px;top:1232.6px;width:2.0px;height:9.0px;background:#5c666e"></div>
<div class="t" style="left:2908.9px;top:1246.2px;font-size:19.4px;font-weight:400;color:#2c3a44;">12:00</div>
<div class="a" style="left:3100.0px;top:1232.6px;width:2.0px;height:9.0px;background:#5c666e"></div>
<div class="t" style="left:3076.7px;top:1246.2px;font-size:19.4px;font-weight:400;color:#2c3a44;">18:00</div>
<div class="a" style="left:3267.5px;top:1232.6px;width:2.0px;height:9.0px;background:#5c666e"></div>
<div class="t" style="left:3235.2px;top:1246.2px;font-size:19.4px;font-weight:400;color:#2c3a44;">Wed 18</div>
<div class="a" style="left:3434.9px;top:1232.6px;width:2.0px;height:9.0px;background:#5c666e"></div>
<div class="t" style="left:3411.6px;top:1246.2px;font-size:19.4px;font-weight:400;color:#2c3a44;">06:00</div>
<div class="a" style="left:2912.0px;top:1299.5px;width:21.5px;height:20.5px;background:#3598ec;border-radius:3px"></div>
<div class="t" style="left:2944.5px;top:1298.6px;font-size:22.92px;font-weight:400;color:#1c2b34;">This query</div>
<div class="a" style="left:3085.4px;top:1299.5px;width:21.5px;height:20.5px;background:#a4a8b0;border-radius:3px"></div>
<div class="t" style="left:3117.5px;top:1298.3px;font-size:23.32px;font-weight:400;color:#1c2b34;">All other queries</div>
<div class="t" style="left:1241.5px;top:1394.2px;font-size:26.01px;font-weight:400;color:#1c2b34;">Explain Plans</div>
<div class="a" style="left:1417.3px;top:1387.0px;width:46.2px;height:36.8px;background:#e3e7ec;border-radius:18px"></div>
<div class="t" style="left:1434.0px;top:1397.3px;font-size:19.78px;font-weight:700;color:#4f5b64;">1</div>
<div class="a" style="left:1240.0px;top:1433.0px;width:225.0px;height:8.4px;background:#0b6dcb"></div>
<div class="a" style="left:1210.0px;top:1441.2px;width:2423.0px;height:2.0px;background:#e3e6ea"></div>
<div class="t" style="left:1526.5px;top:1393.2px;font-size:27.22px;font-weight:400;color:#5f6b74;">Metrics</div>
<div class="t" style="left:1678.0px;top:1393.3px;font-size:27.02px;font-weight:400;color:#5f6b74;">Hosts Running This Query</div>
<div class="a" style="left:2011.0px;top:1387.0px;width:46.2px;height:36.8px;background:#e3e7ec;border-radius:18px"></div>
<div class="t" style="left:2027.5px;top:1395.7px;font-size:21.58px;font-weight:700;color:#4f5b64;">3</div>
<div class="a" style="left:1242.0px;top:1476.4px;width:2367.2px;height:121.3px;border:2px solid #e3e6ea;border-radius:6px;overflow:hidden"></div>
<div class="a" style="left:1244.0px;top:1531.0px;width:2363.2px;height:64.7px;background:#e9f4fb;border-radius:0 0 5px 5px"></div>
<div class="a" style="left:1244.0px;top:1530.0px;width:2363.2px;height:2.0px;background:#e3e6ea"></div>
<div class="t" style="left:1257.5px;top:1492.0px;font-size:24.49px;font-weight:700;color:#1c2b34;transform:scaleX(0.9517);transform-origin:0 0;">PLAN OPERATIONS</div>
<div class="t" style="left:2203.5px;top:1492.0px;font-size:24.49px;font-weight:700;color:#1c2b34;transform:scaleX(0.8746);transform-origin:0 0;">LAST SEEN</div>
<div class="t" style="left:2711.0px;top:1492.0px;font-size:24.49px;font-weight:700;color:#1c2b34;transform:scaleX(0.9135);transform-origin:0 0;">QUERY SAMPLES</div>
<div class="t" style="left:3088.0px;top:1492.0px;font-size:24.49px;font-weight:700;color:#1c2b34;transform:scaleX(0.9308);transform-origin:0 0;">AVG LATENCY</div>
<div class="t" style="left:3477.7px;top:1492.0px;font-size:24.49px;font-weight:700;color:#1c2b34;transform:scaleX(0.9121);transform-origin:0 0;">AVG COST</div>
<div class="t" style="left:1257.5px;top:1550.9px;font-size:28.26px;font-weight:700;color:#1c2b34;transform:scaleX(0.7866);transform-origin:0 0;">SELECT</div>
<svg class="a" style="left:1356.7px;top:1556.0px;" width="25" height="19" viewBox="0 0 25 19"><path d="M1 9.5 H21 M13 1.8 L21.5 9.5 L13 17.2" fill="none" stroke="#9aa2a9" stroke-width="3" stroke-linejoin="round"/></svg>
<div class="t" style="left:1390.0px;top:1552.3px;font-size:26.53px;font-weight:400;color:#1c2b34;">Clustered Index Seek</div>
<div class="t" style="left:2203.5px;top:1552.8px;font-size:26.0px;font-weight:400;color:#1c2b34;">May 18, 2022, 11:56 am</div>
<div class="t" style="left:2764.3px;top:1552.1px;font-size:26.8px;font-weight:400;color:#1c2b34;">289</div>
<div class="a" style="left:2826.0px;top:1552.6px;width:79.5px;height:23.3px;background:#3598ec"></div>
<div class="t" style="left:3064.6px;top:1552.1px;font-size:26.8px;font-weight:400;color:#1c2b34;">64.1 μs</div>
<div class="a" style="left:3170.6px;top:1552.6px;width:79.5px;height:23.3px;background:#3598ec"></div>
<div class="t" style="left:3445.4px;top:1552.1px;font-size:26.8px;font-weight:400;color:#1c2b34;">0.03</div>
<div class="a" style="left:3514.0px;top:1552.6px;width:79.5px;height:23.3px;background:#3598ec"></div>
<div class="a" style="left:1241.7px;top:1630.7px;width:297.6px;height:54.5px;border:2px solid #c6cbd2;border-radius:6px"></div>
<div class="a" style="left:1241.7px;top:1630.7px;width:145.3px;height:54.5px;background:#0b6ecc;border-radius:6px 0 0 6px"></div>
<div class="t" style="left:1262.0px;top:1645.9px;font-size:26.07px;font-weight:400;color:#fff;">Plan List</div>
<div class="t" style="left:1405.5px;top:1646.3px;font-size:25.6px;font-weight:400;color:#1c2b34;">Plan XML</div>
<svg class="a" style="left:1573.5px;top:1640.0px;" width="25" height="27" viewBox="0 0 25 27"><circle cx="18.6" cy="7.4" r="3.6" fill="#0b6fcf"/><path d="M10 6 L21 17.3" stroke="#0b6fcf" stroke-width="2.4" stroke-linecap="round"/><path d="M13.2 10.2 L3 20.4 L1.8 25.2 L6.6 24 L16.8 13.8" fill="none" stroke="#0b6fcf" stroke-width="2.2" stroke-linejoin="round"/></svg>
<div class="t" style="left:1615.0px;top:1644.4px;font-size:26.07295px;font-weight:400;color:#1a6ec2;">View All <b>289 Samples</b> For This Plan</div>
<div class="a" style="left:3383.6px;top:1631.0px;width:225.6px;height:54.5px;border:2px solid #c6cbd2;border-radius:6px"></div>
<svg class="a" style="left:3406.5px;top:1643.5px;" width="28" height="27" viewBox="0 0 28 27"><path d="M1.3 14 V25.7 H26.7 V14" fill="none" stroke="#66737a" stroke-width="2.5"/><path d="M14 1 V18 M7 11 L14 18 L21 11" fill="none" stroke="#66737a" stroke-width="2.5"/></svg>
<div class="t" style="left:3449.5px;top:1645.6px;font-size:26.46px;font-weight:400;color:#1c2b34;">Export Plan</div>
<div class="a" style="left:1242.0px;top:1703.0px;width:2367.2px;height:300.0px;border:2px solid #e3e6ea;border-radius:6px"></div>
<div class="a" style="left:3560.0px;top:1705.0px;width:47.0px;height:230.0px;background:linear-gradient(to right,rgba(0,0,0,0),rgba(0,0,0,.07))"></div>
<div class="t" style="left:1257.5px;top:1719.8px;font-size:24.49px;font-weight:700;color:#1c2b34;transform:scaleX(0.9681);transform-origin:0 0;">NODE</div>
<div class="t" style="left:2857.5px;top:1719.8px;font-size:24.49px;font-weight:700;color:#1c2b34;transform:scaleX(0.9241);transform-origin:0 0;">ROWS</div>
<div class="t" style="left:3081.5px;top:1719.8px;font-size:24.49px;font-weight:700;color:#1c2b34;transform:scaleX(0.9249);transform-origin:0 0;">ROW SIZE</div>
<div class="t" style="left:3413.0px;top:1719.8px;font-size:24.49px;font-weight:700;color:#1c2b34;transform:scaleX(0.9147);transform-origin:0 0;">CPU</div>
<div class="a" style="left:1244.0px;top:1757.3px;width:2363.2px;height:2.0px;background:#e3e6ea"></div>
<div class="a" style="left:1259.4px;top:1795.6px;width:28.0px;height:28.0px;background:#0b6ecc;border-radius:4px"></div>
<div class="a" style="left:1265.5px;top:1808.2px;width:15.8px;height:3.2px;background:#fff"></div>
<div class="t" style="left:1303.0px;top:1778.6px;font-size:27.25px;font-weight:700;color:#1c2b34;transform:scaleX(0.8149);transform-origin:0 0;">SELECT</div>
<div class="t" style="left:1303.0px;top:1816.1px;font-size:25.87px;font-weight:400;color:#1c2b34;">Query Hash: 0x29CEC0364A50E9B7 | Query Plan Hash: 0x7B3B37D797DAD04C</div>
<div class="a" style="left:1272.8px;top:1823.6px;width:2.0px;height:88.4px;background:#c8cdd3"></div>
<div class="a" style="left:1272.8px;top:1910.0px;width:42.0px;height:2.0px;background:#c8cdd3"></div>
<div class="t" style="left:1334.5px;top:1881.3px;font-size:27.97px;font-weight:700;color:#1c2b34;transform:scaleX(0.9550);transform-origin:0 0;">Clustered Index Seek</div>
<svg class="a" style="left:1623.5px;top:1882.5px;" width="22" height="26" viewBox="0 0 22 26"><path d="M1.3 1.3 H14 L20.7 8 V24.7 H1.3 Z" fill="none" stroke="#1a6ec2" stroke-width="2.4"/><path d="M5.5 11 H16 M5.5 15.5 H16 M5.5 20 H16" stroke="#1a6ec2" stroke-width="2.2"/></svg>
<div class="t" style="left:1334.5px;top:1917.4px;font-size:26.65px;font-weight:400;color:#1c2b34;">Index: [PK__dbm_orde__3213E83FF1B44A38] | Table: [dbmorders_3].[dbo].[dbm_order] | Direction: FORWARD</div>
<div class="t" style="left:2727.0px;top:1882.0px;font-size:25.37px;font-weight:400;color:#1c2b34;">11.0</div>
<div class="t" style="left:2968.5px;top:1882.1px;font-size:25.25px;font-weight:400;color:#1c2b34;">43.0 B</div>
<div class="t" style="left:3238.0px;top:1883.0px;font-size:24.22px;font-weight:400;color:#1c2b34;">&lt; 0.01</div>
<div class="t" style="left:3504.9px;top:1883.0px;font-size:24.22px;font-weight:400;color:#1c2b34;">&lt; 0.01</div>
<div class="a" style="left:2849.0px;top:1881.0px;width:79.5px;height:23.8px;background:#3598ec"></div>
<div class="a" style="left:3115.7px;top:1881.0px;width:79.5px;height:23.8px;background:#3598ec"></div>
<div class="a" style="left:3382.6px;top:1881.0px;width:79.5px;height:23.8px;background:#3598ec"></div>
<svg class="a" style="left:192.5px;top:251.0px;" width="50" height="58" viewBox="0 0 50 58"><ellipse cx="7.2" cy="11.5" rx="6" ry="8" transform="rotate(-25 7.2 11.5)" fill="#e9e8eb"/><path d="M9.5 8 C14 2.5 22 1.5 29 3.5 L32 0.8 C37 1 40 6 38.8 11.5 C40 17 40 23 37.5 27.5 C34.5 31 29 32 24.5 31.5 L22 33.5 C18 34.5 14 33.5 12 30 C9.5 26 9 20 10.5 15 Z" fill="#e9e8eb"/><path d="M9.5 14 C8 11 9 7 12 6" fill="none" stroke="#423c46" stroke-width="1"/><path d="M30 3.5 C33 5 35 8 36 11" fill="none" stroke="#423c46" stroke-width="1"/><path d="M11.5 28 C8.5 33 8.5 39 11 43 L23 45 L23 31 Z" fill="#e9e8eb"/><ellipse cx="10.2" cy="50" rx="7.6" ry="8.2" fill="#e9e8eb"/><path d="M12 43.5 C15 42.5 18 44 19 47" fill="none" stroke="#423c46" stroke-width="1.1"/><ellipse cx="20.6" cy="17.8" rx="2.4" ry="2.1" fill="#423c46"/><ellipse cx="32.3" cy="15.6" rx="1.6" ry="1.8" fill="#423c46"/><path d="M31 24.5 C33 23 36 23 36.5 24 C36 26 34 27 33 27 Z" fill="#423c46"/><path d="M25 30.5 C27 32 30 32 33 31" fill="none" stroke="#423c46" stroke-width="1"/><path d="M19.5 33.2 L48.5 29.8 L50 49.7 L22.5 53.9 Z" fill="#e9e8eb"/><path d="M22 35.5 L46.5 32.5 L47.8 47.8 L24.5 51.5 Z" fill="none" stroke="#423c46" stroke-width="1.1"/><path d="M25 50.5 L29 44 L32 45.5 L36 39 L39 41 L42 35.5 L45 33.5 L47.2 47.5 Z" fill="#423c46"/></svg>
<svg class="a" style="left:199.0px;top:559.0px;" width="32" height="32" viewBox="0 0 32 32"><circle cx="13.3" cy="13.4" r="9.8" fill="none" stroke="#a8a5ac" stroke-width="2.6"/><path d="M20.5 20.5 L28.5 28.5" stroke="#a8a5ac" stroke-width="3" stroke-linecap="round"/></svg>
<svg class="a" style="left:198.9px;top:630.0px;" width="32" height="32" viewBox="0 0 32 32"><rect x="6" y="0" width="6.5" height="5" fill="#a8a5ac"/><rect x="19.5" y="0" width="6.5" height="5" fill="#a8a5ac"/><path d="M4.5 6.5 H13.5 V32 H0 V22 Z M18.5 6.5 H27.5 L32 22 V32 H18.5 Z" fill="#a8a5ac"/><rect x="13.5" y="10" width="5" height="11" fill="#a8a5ac"/></svg>
<svg class="a" style="left:198.9px;top:705.0px;" width="32" height="25.5" viewBox="0 0 32 25.5"><rect x="0" y="0" width="31.8" height="25" rx="3" fill="#a8a5ac"/><rect x="3" y="7" width="26" height="15" fill="#3c3540"/><path d="M4.5 9.5 H7 M4.5 14.5 H7 M4.5 19 H7 M9 9.5 H27 M9 14.5 H27 M9 19 H27" stroke="#a8a5ac" stroke-width="2.2"/></svg>
<svg class="a" style="left:198.9px;top:776.5px;" width="32" height="25.5" viewBox="0 0 32 25.5"><path d="M1.3 0 V23.7 H32" fill="none" stroke="#a8a5ac" stroke-width="2.4"/><path d="M4 21 V9 L10 3 L17 10 L22.5 5.5 L29 21 Z" fill="#a8a5ac"/></svg>
<svg class="a" style="left:198.7px;top:845.5px;" width="33" height="33" viewBox="0 0 33 33"><polygon points="14.3,11.9 7.5,15.8 0.7,11.9 0.7,4.1 7.5,0.2 14.3,4.1" fill="#a8a5ac"/><polygon points="30.2,11.3 24.5,14.6 18.8,11.3 18.8,4.7 24.5,1.4 30.2,4.7" fill="none" stroke="#a8a5ac" stroke-width="2.3"/><polygon points="22.8,28.4 16.0,32.3 9.2,28.4 9.2,20.6 16.0,16.7 22.8,20.6" fill="#a8a5ac"/></svg>
<svg class="a" style="left:200.0px;top:918.5px;" width="31" height="30" viewBox="0 0 31 30"><path d="M2.80 10.39 A13.2 13.2 0 0 1 21.40 3.25 M28.27 13.06 A13.2 13.2 0 0 1 2.45 18.32" fill="none" stroke="#a8a5ac" stroke-width="2.6"/><path d="M21.18 12.11 A6.6 6.6 0 1 1 16.91 8.52" fill="none" stroke="#a8a5ac" stroke-width="2.6"/><path d="M15.2 14.9 L27.5 2.6" stroke="#a8a5ac" stroke-width="2.8" stroke-linecap="round"/><circle cx="1.8" cy="14.2" r="1.8" fill="#a8a5ac"/></svg>
<svg class="a" style="left:198.7px;top:991.0px;" width="33" height="27" viewBox="0 0 33 27"><path d="M5.31 24.99 A13.2 13.2 0 0 1 16.96 4.81" fill="none" stroke="#a8a5ac" stroke-width="3.2" stroke-dasharray="2.8 1.6"/><path d="M27.44 10.62 A13.2 13.2 0 0 1 27.93 24.60" fill="none" stroke="#a8a5ac" stroke-width="4" stroke-linecap="round"/><path d="M13.5 17 L25.3 1.6 L18.8 20.5 C17.5 22.5 13.8 21.8 13.2 19.5 Z" fill="#a8a5ac"/></svg>
<svg class="a" style="left:198.7px;top:1061.5px;" width="33" height="29" viewBox="0 0 33 29"><path d="M0 8.5 H8.5 C7 5 9 1 12.5 1 C16 1 18 5 16.5 8.5 H24.5 V15.5 C28 14 32 16 32 19.5 C32 23 28 25 24.5 23.5 V28.5 H16.5 C17.5 25 15.5 22.5 12.5 22.5 C9.5 22.5 7.5 25 8.5 28.5 H0 Z" fill="#a8a5ac"/></svg>
<svg class="a" style="left:198.7px;top:1133.0px;" width="33" height="29" viewBox="0 0 33 29"><path d="M0 2 H32 M0 9.5 H6 M10 9.5 H32 M10 17 H22 M26 17 H32 M16 25.5 H22" stroke="#a8a5ac" stroke-width="3.6"/></svg>
<svg class="a" style="left:200.0px;top:1204.0px;" width="31" height="30" viewBox="0 0 31 30"><path d="M14 12 C17 6 13 1.5 9 1.5 C4.5 1.5 1.5 5 1.5 8.5 C1.5 12.5 5 15 9.5 16 L20 18 C25 19 28.5 21 28.5 24 C28.5 27 26 29 22.5 28.5 C19.5 28 17.5 26 17.5 23" fill="none" stroke="#a8a5ac" stroke-width="2.4"/><path d="M13 21.5 L17.5 25.5 L21.5 20.5" fill="none" stroke="#a8a5ac" stroke-width="2.4"/></svg>
<svg class="a" style="left:200.0px;top:1275.5px;" width="31" height="31" viewBox="0 0 31 31"><path d="M6 1 H29.5 L24 24 H1.5 Z" fill="#a8a5ac"/><path d="M1.5 24 C0 28 2 29.5 4 29.5 H23 L24 26" fill="none" stroke="#a8a5ac" stroke-width="2.4"/><path d="M10 7.5 H23 M9 12.5 H22" stroke="#2c2331" stroke-width="2.4"/></svg>
<svg class="a" style="left:199.5px;top:1346.0px;" width="32" height="33" viewBox="0 0 32 33"><path d="M0 2 H4 M7.5 2 H12 M15 2 H19.5 M23 2 H27 M0 9 H6 M0 16 H6 M0 23 H6" stroke="#a8a5ac" stroke-width="3"/><circle cx="20" cy="17" r="9" fill="none" stroke="#a8a5ac" stroke-width="2.6"/><path d="M13.5 23.5 L6.5 31" stroke="#a8a5ac" stroke-width="3" stroke-linecap="round"/><path d="M16.5 20 L20.5 15.5 L24 20 Z" fill="#a8a5ac"/></svg>
<svg class="a" style="left:202.5px;top:1418.8px;" width="26" height="32" viewBox="0 0 26 32"><path d="M12.5 1.5 L23.5 6.5 V17 C23.5 24 18 28.5 12.5 30.5 C7 28.5 1.5 24 1.5 17 V6.5 Z" fill="none" stroke="#a8a5ac" stroke-width="2.6"/><path d="M12.5 2 V30 M2 14 L12 8 M2 21 L12 15.5 M5 27 L12 22.5" stroke="#a8a5ac" stroke-width="2.4"/></svg>
<svg class="a" style="left:200.0px;top:1489.0px;" width="31" height="33" viewBox="0 0 31 33"><circle cx="15.5" cy="16.5" r="10" fill="none" stroke="#a8a5ac" stroke-width="2.4"/><path d="M5.5 16.5 H25.5 M15.5 6.5 C10 12 10 21 15.5 26.5 C21 21 21 12 15.5 6.5" fill="none" stroke="#a8a5ac" stroke-width="2"/><circle cx="15.5" cy="2.5" r="2.3" fill="#a8a5ac"/><circle cx="15.5" cy="30.5" r="2.3" fill="#a8a5ac"/><circle cx="2.5" cy="9" r="2.3" fill="#a8a5ac"/><circle cx="28.5" cy="9" r="2.3" fill="#a8a5ac"/><circle cx="2.5" cy="24" r="2.3" fill="#a8a5ac"/><circle cx="28.5" cy="24" r="2.3" fill="#a8a5ac"/></svg>
<svg class="a" style="left:200.3px;top:1790.5px;" width="30" height="28" viewBox="0 0 30 28"><path d="M3.5 1.3 H26 C27.5 1.3 28.7 2.5 28.7 4 V17 C28.7 18.5 27.5 19.7 26 19.7 H15 L6.5 25.5 L7 19.7 H3.5 C2 19.7 1.3 18.5 1.3 17 V4 C1.3 2.5 2 1.3 3.5 1.3 Z" fill="none" stroke="#a8a5ac" stroke-width="2.4" stroke-linejoin="round"/></svg>
<svg class="a" style="left:200.8px;top:1860.4px;" width="28.5" height="28.5" viewBox="0 0 28.5 28.5"><circle cx="14.2" cy="14.2" r="14" fill="#a8a5ac"/><path d="M9.5 11 C9.5 7.5 12 5.8 14.5 5.8 C17.5 5.8 19.5 7.8 19.5 10.5 C19.5 13.5 15.5 14 15.5 17" fill="none" stroke="#160b19" stroke-width="3.3"/><rect x="13.5" y="19.5" width="4" height="3.8" fill="#160b19"/></svg>
<svg class="a" style="left:204.0px;top:1922.0px;" width="24" height="10" viewBox="0 0 24 10"><circle cx="12" cy="12" r="11" fill="#2e8fb0"/><rect x="6" y="2" width="3" height="8" fill="#63b7e8"/><rect x="15" y="2" width="3" height="8" fill="#63b7e8"/></svg>
</body></html>
